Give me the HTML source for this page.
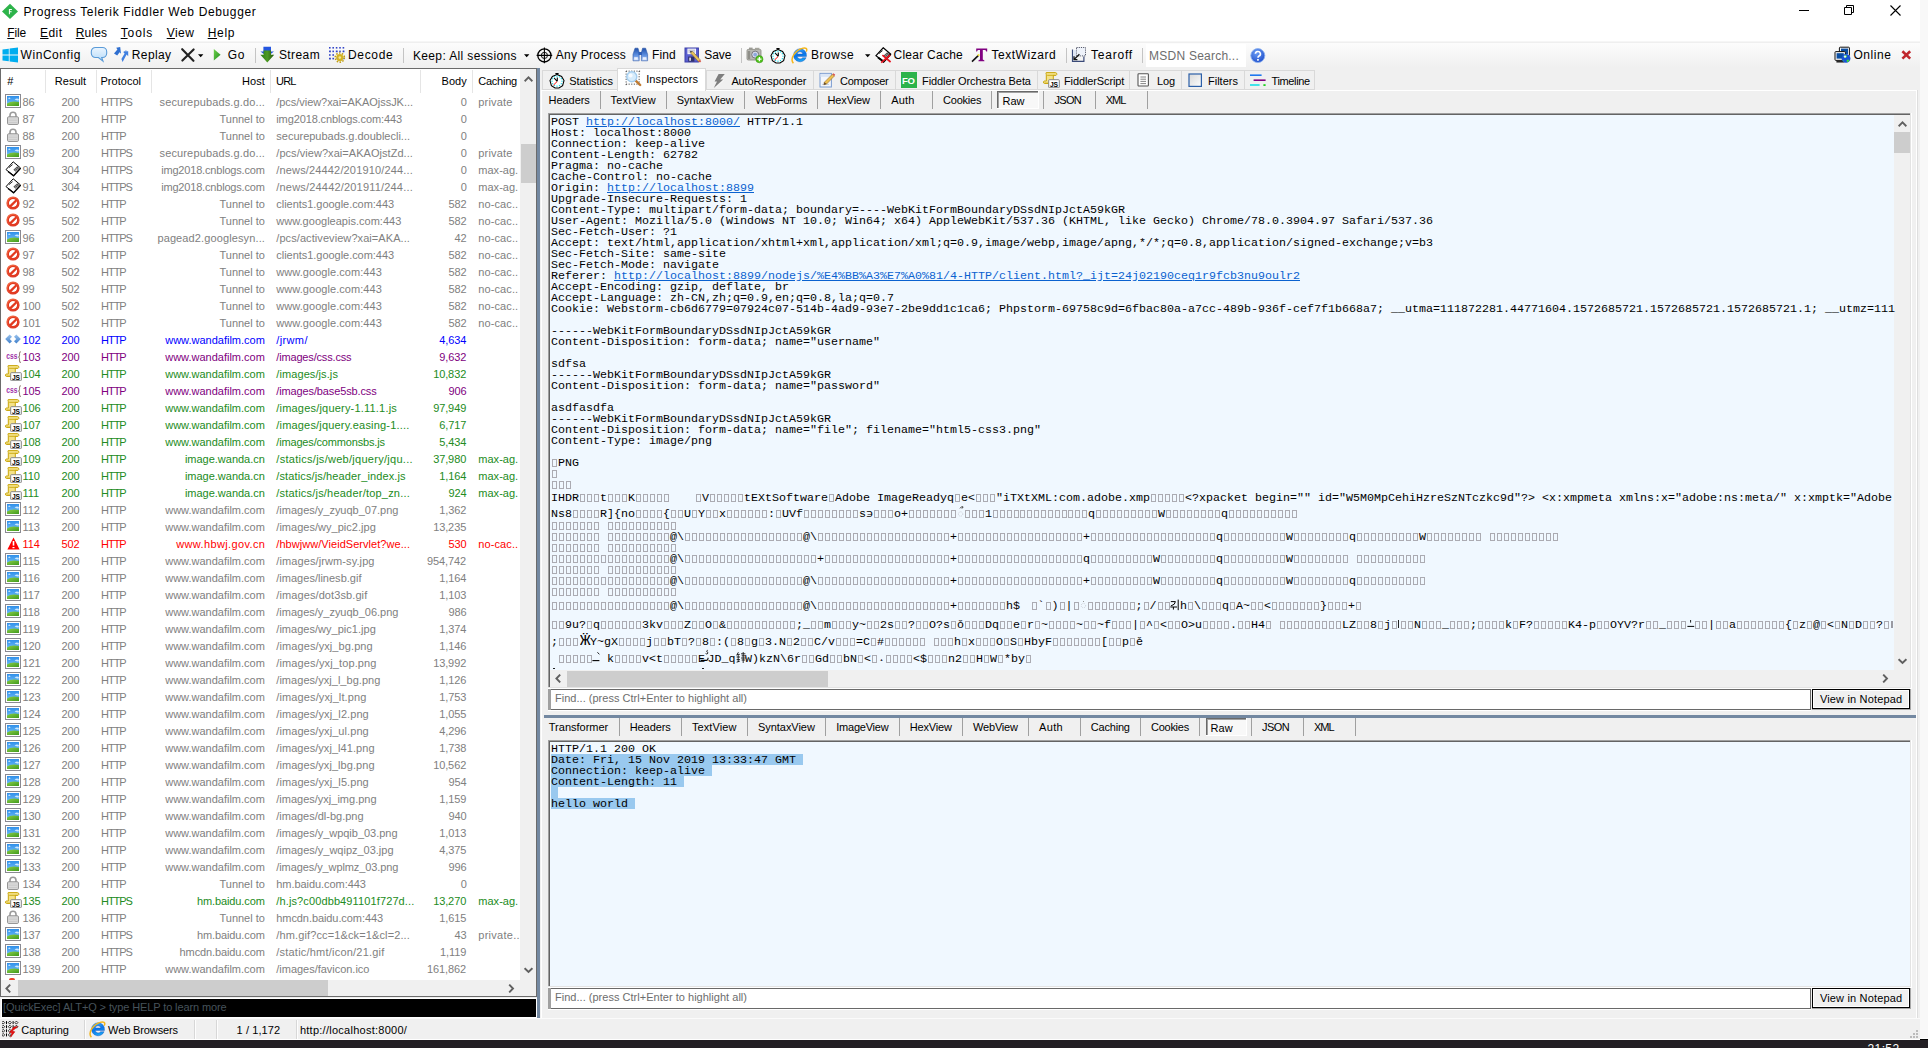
<!DOCTYPE html>
<html><head><meta charset="utf-8"><title>Fiddler</title>
<style>
html,body{margin:0;padding:0;background:#f0f0f0;}
body{width:1928px;height:1048px;overflow:hidden;font-family:"Liberation Sans",sans-serif;font-size:11px;color:#000;}
#root{position:relative;width:1928px;height:1048px;overflow:hidden;background:#f0f0f0;}
#root div,#root span.t,#root svg{position:absolute;}
span.t{white-space:pre;display:block;}
span.m{position:absolute;white-space:pre;display:block;font-family:"Liberation Mono",monospace;font-size:11.6667px;line-height:18px;letter-spacing:0.005px;color:#000;}
span.lk{color:#0a62d0;text-decoration:underline;}
div.tf{height:8px;background-repeat:repeat-x;
 background-image:linear-gradient(to right,transparent 1px,#ababb2 1px,#ababb2 6px,transparent 6px),linear-gradient(to right,transparent 1px,#ababb2 1px,#ababb2 6px,transparent 6px),linear-gradient(to right,transparent 1px,#ababb2 1px,#ababb2 2px,transparent 2px),linear-gradient(to right,transparent 5px,#ababb2 5px,#ababb2 6px,transparent 6px);
 background-size:7px 1px,7px 1px,7px 8px,7px 8px;background-position:0 0,0 7px,0 0,0 0;}

</style></head>
<body>
<div id="root">
<div style="left:0px;top:0px;width:1920px;height:42px;background:#fff;"></div>
<div style="left:1920px;top:0px;width:8px;height:1040px;background:#f8f8f8;"></div>
<div style="left:0px;top:43px;width:1920px;height:25px;background:linear-gradient(#fcfcfc,#f0f0f0);"></div>
<div style="left:0px;top:41px;width:1920px;height:1px;background:#f6f6f6;"></div>
<div style="left:0px;top:42px;width:1920px;height:1px;background:#efefef;"></div>
<div style="left:0px;top:1040px;width:1928px;height:8px;background:#231f24;"></div>
<div style="left:0px;top:68px;width:537px;height:929px;background:#6b6b6b;"></div>
<div style="left:1px;top:69px;width:535px;height:927px;background:#fff;"></div>
<div style="left:520px;top:69px;width:16px;height:911px;background:#f0f0f0;"></div>
<div style="left:521px;top:144px;width:15px;height:39px;background:#cdcdcd;"></div>
<div style="left:1px;top:980px;width:535px;height:16px;background:#f0f0f0;"></div>
<div style="left:18px;top:980px;width:310px;height:16px;background:#cdcdcd;"></div>
<div style="left:537px;top:68px;width:3px;height:950px;background:#7388a1;"></div>
<div style="left:1px;top:998px;width:536px;height:20px;background:#fff;"></div>
<div style="left:2px;top:999px;width:534px;height:18px;background:#000;"></div>
<div style="left:0px;top:1018px;width:1920px;height:22px;background:#f0f0f0;"></div>
<div style="left:0px;top:1018px;width:1920px;height:1px;background:#fbfbfb;"></div>
<div style="left:541px;top:90px;width:1376px;height:1px;background:#fff;"></div>
<div style="left:541px;top:90px;width:1px;height:928px;background:#fff;"></div>
<div style="left:1916px;top:90px;width:1px;height:928px;background:#fff;"></div>
<div style="left:1917px;top:90px;width:1px;height:928px;background:#dedede;"></div>
<div style="left:548px;top:113px;width:1362px;height:574px;background:#f0f8ff;"></div>
<div style="left:548px;top:113px;width:1362px;height:1px;background:#a0a0a0;"></div>
<div style="left:548px;top:113px;width:1px;height:574px;background:#a0a0a0;"></div>
<div style="left:549px;top:114px;width:1361px;height:1px;background:#646464;"></div>
<div style="left:549px;top:114px;width:1px;height:573px;background:#646464;"></div>
<div style="left:1910px;top:113px;width:1px;height:575px;background:#e3e3e3;"></div>
<div style="left:548px;top:687px;width:1363px;height:1px;background:#e3e3e3;"></div>
<div style="left:1911px;top:113px;width:1px;height:576px;background:#fff;"></div>
<div style="left:548px;top:688px;width:1364px;height:1px;background:#fff;"></div>
<div style="left:1894px;top:115px;width:16px;height:555px;background:#f0f0f0;"></div>
<div style="left:1894px;top:132px;width:16px;height:21px;background:#cdcdcd;"></div>
<div style="left:550px;top:670px;width:1360px;height:17px;background:#f0f0f0;"></div>
<div style="left:567px;top:671px;width:261px;height:16px;background:#cdcdcd;"></div>
<div style="left:548px;top:689px;width:1263px;height:21px;background:#696969;"></div>
<div style="left:548px;top:689px;width:3px;height:21px;background:#a0a0a0;"></div>
<div style="left:551px;top:690px;width:1259px;height:19px;background:#fff;"></div>
<div style="left:548px;top:710px;width:1263px;height:1px;background:#fff;"></div>
<div style="left:1812px;top:689px;width:99px;height:21px;background:#a8a8a8;"></div>
<div style="left:1812px;top:689px;width:98px;height:20px;background:#000;"></div>
<div style="left:1813px;top:690px;width:96px;height:18px;background:#fff;"></div>
<div style="left:1814px;top:691px;width:94px;height:16px;background:#f0f0f0;"></div>
<div style="left:544px;top:715px;width:1372px;height:3px;background:#7388a1;"></div>
<div style="left:548px;top:740px;width:1362px;height:246px;background:#f0f8ff;"></div>
<div style="left:548px;top:740px;width:1362px;height:1px;background:#a0a0a0;"></div>
<div style="left:548px;top:740px;width:1px;height:246px;background:#a0a0a0;"></div>
<div style="left:549px;top:741px;width:1361px;height:1px;background:#646464;"></div>
<div style="left:549px;top:741px;width:1px;height:245px;background:#646464;"></div>
<div style="left:1910px;top:740px;width:1px;height:247px;background:#e3e3e3;"></div>
<div style="left:548px;top:986px;width:1363px;height:1px;background:#e3e3e3;"></div>
<div style="left:1911px;top:740px;width:1px;height:248px;background:#fff;"></div>
<div style="left:548px;top:987px;width:1364px;height:1px;background:#fff;"></div>
<div style="left:548px;top:988px;width:1263px;height:21px;background:#696969;"></div>
<div style="left:548px;top:988px;width:3px;height:21px;background:#a0a0a0;"></div>
<div style="left:551px;top:989px;width:1259px;height:19px;background:#fff;"></div>
<div style="left:548px;top:1009px;width:1263px;height:1px;background:#fff;"></div>
<div style="left:1812px;top:988px;width:99px;height:21px;background:#a8a8a8;"></div>
<div style="left:1812px;top:988px;width:98px;height:20px;background:#000;"></div>
<div style="left:1813px;top:989px;width:96px;height:18px;background:#fff;"></div>
<div style="left:1814px;top:990px;width:94px;height:16px;background:#f0f0f0;"></div>
<span class="t" style="left:23.40px;top:2.84px;line-height:18px;font-size:12px;color:#000;letter-spacing:0.631px;">Progress Telerik Fiddler Web Debugger</span>
<span class="t" style="left:7.30px;top:23.84px;line-height:18px;font-size:12px;color:#000;letter-spacing:-0.161px;"><u>F</u>ile</span>
<span class="t" style="left:40.10px;top:23.84px;line-height:18px;font-size:12px;color:#000;letter-spacing:0.403px;"><u>E</u>dit</span>
<span class="t" style="left:75.80px;top:23.84px;line-height:18px;font-size:12px;color:#000;letter-spacing:0.143px;"><u>R</u>ules</span>
<span class="t" style="left:120.70px;top:23.84px;line-height:18px;font-size:12px;color:#000;letter-spacing:0.877px;"><u>T</u>ools</span>
<span class="t" style="left:166.70px;top:23.84px;line-height:18px;font-size:12px;color:#000;letter-spacing:0.476px;"><u>V</u>iew</span>
<span class="t" style="left:207.70px;top:23.84px;line-height:18px;font-size:12px;color:#000;letter-spacing:0.703px;"><u>H</u>elp</span>
<span class="t" style="left:20.50px;top:45.84px;line-height:18px;font-size:12px;color:#000;letter-spacing:0.571px;">WinConfig</span>
<span class="t" style="left:131.80px;top:45.84px;line-height:18px;font-size:12px;color:#000;letter-spacing:0.390px;">Replay</span>
<span class="t" style="left:227.80px;top:45.84px;line-height:18px;font-size:12px;color:#000;letter-spacing:0.542px;">Go</span>
<span class="t" style="left:278.90px;top:45.84px;line-height:18px;font-size:12px;color:#000;letter-spacing:0.419px;">Stream</span>
<span class="t" style="left:348.00px;top:45.84px;line-height:18px;font-size:12px;color:#000;letter-spacing:0.671px;">Decode</span>
<span class="t" style="left:412.90px;top:46.84px;line-height:18px;font-size:12px;color:#000;letter-spacing:0.373px;">Keep: All sessions</span>
<span class="t" style="left:555.70px;top:45.84px;line-height:18px;font-size:12px;color:#000;letter-spacing:0.267px;">Any Process</span>
<span class="t" style="left:652.10px;top:45.84px;line-height:18px;font-size:12px;color:#000;letter-spacing:0.089px;">Find</span>
<span class="t" style="left:704.20px;top:45.84px;line-height:18px;font-size:12px;color:#000;letter-spacing:-0.040px;">Save</span>
<span class="t" style="left:811.10px;top:45.84px;line-height:18px;font-size:12px;color:#000;letter-spacing:0.514px;">Browse</span>
<span class="t" style="left:893.50px;top:45.84px;line-height:18px;font-size:12px;color:#000;letter-spacing:0.254px;">Clear Cache</span>
<span class="t" style="left:991.40px;top:45.84px;line-height:18px;font-size:12px;color:#000;letter-spacing:0.546px;">TextWizard</span>
<span class="t" style="left:1090.90px;top:45.84px;line-height:18px;font-size:12px;color:#000;letter-spacing:0.804px;">Tearoff</span>
<span class="t" style="left:1853.50px;top:45.84px;line-height:18px;font-size:12px;color:#000;letter-spacing:0.535px;">Online</span>
<div style="left:255px;top:48px;width:1px;height:15px;background:#c4c4c4;"></div>
<div style="left:403px;top:48px;width:1px;height:15px;background:#c4c4c4;"></div>
<div style="left:741px;top:48px;width:1px;height:15px;background:#c4c4c4;"></div>
<div style="left:1066px;top:48px;width:1px;height:15px;background:#c4c4c4;"></div>
<div style="left:1142px;top:48px;width:1px;height:15px;background:#c4c4c4;"></div>
<div style="left:1146px;top:44px;width:100px;height:23px;background:#fff;"></div>
<span class="t" style="left:1149.10px;top:46.84px;line-height:18px;font-size:12px;color:#6d6d6d;letter-spacing:0.228px;">MSDN Search...</span>
<svg style="left:1px;top:3px" width="18" height="17" viewBox="0 0 18 17"><path d="M9 0.8 L17 8.4 L9 16 L1 8.4Z" fill="#2db34a"/><path d="M7.9 6 h3 v1 h-2 v1.2 h1.7 v1 h-1.7 v2 h-1z" fill="#fff"/></svg>
<svg style="left:1798px;top:4px" width="106" height="13" viewBox="0 0 106 13"><path d="M1 6.5h10" stroke="#000" stroke-width="1"/><path d="M46.5 3.5h7v7h-7z M48.5 3.5v-2h7v7h-2" fill="none" stroke="#000" stroke-width="1"/><path d="M92.5 1.5l10 10M102.5 1.5l-10 10" stroke="#000" stroke-width="1.1"/></svg>
<svg style="left:2px;top:47px" width="17" height="16" viewBox="0 0 17 16"><path d="M0.5 2.6 L6.8 1.7 V7.6 H0.5Z M7.6 1.6 L16 0.4 V7.6 H7.6Z M0.5 8.4 H6.8 V14.3 L0.5 13.4Z M7.6 8.4 H16 V15.6 L7.6 14.4Z" fill="#00adef"/></svg>
<svg style="left:90px;top:46px" width="18" height="17" viewBox="0 0 18 17"><defs><linearGradient id="gb" x1="0" y1="0" x2="0" y2="1"><stop offset="0" stop-color="#eaf5ff"/><stop offset="1" stop-color="#b9dcf8"/></linearGradient></defs><path d="M5.5 1.5 h7 a4.2 4.2 0 0 1 4.2 4.2 v1.6 a4.2 4.2 0 0 1 -4.2 4.2 h-0.8 l1.3 3.6 l-4.6 -3.6 h-2.9 a4.2 4.2 0 0 1 -4.2 -4.2 v-1.6 a4.2 4.2 0 0 1 4.2 -4.2z" fill="url(#gb)" stroke="#5a9bd8" stroke-width="1.1"/></svg>
<svg style="left:113px;top:46px" width="16" height="17" viewBox="0 0 16 17"><path d="M7.2 1 L3.2 1.8 L4.4 3.4 L1 7.6 L4.2 9.6 L6.6 6.2 L8 7.8Z" fill="#2f6fd0"/><path d="M9.6 16 L13.6 8.6 L15.2 10.2 L15.2 5.2 L10.2 6 L11.6 7.4 L8.4 13Z" fill="#3f7fe0"/><path d="M10.2 6 L12.6 4.6 L15.2 5.2" fill="#3f7fe0"/></svg>
<svg style="left:181px;top:48px" width="14" height="14" viewBox="0 0 14 14"><path d="M1.2 1.2 L12.4 12.8 M12.6 1.4 L1.4 12.6" stroke="#222" stroke-width="2.1" stroke-linecap="round"/></svg>
<svg style="left:198px;top:54px" width="6" height="4" viewBox="0 0 6 4"><path d="M0 0.3h5.4l-2.7 3z" fill="#000"/></svg>
<svg style="left:524px;top:54px" width="6" height="4" viewBox="0 0 6 4"><path d="M0 0.3h5.4l-2.7 3z" fill="#000"/></svg>
<svg style="left:864.5px;top:54px" width="6" height="4" viewBox="0 0 6 4"><path d="M0 0.3h5.4l-2.7 3z" fill="#000"/></svg>
<svg style="left:213px;top:48px" width="9" height="14" viewBox="0 0 9 14"><defs><linearGradient id="gg" x1="0" y1="0" x2="1" y2="1"><stop offset="0" stop-color="#6fd24a"/><stop offset="1" stop-color="#1f8a1f"/></linearGradient></defs><path d="M0.8 1 L7.6 6.8 L0.8 12.6Z" fill="url(#gg)"/></svg>
<svg style="left:260px;top:46px" width="15" height="18" viewBox="0 0 15 18"><defs><linearGradient id="gs" x1="0" y1="0" x2="1" y2="0"><stop offset="0" stop-color="#2e7d14"/><stop offset="0.5" stop-color="#4d9a22"/><stop offset="1" stop-color="#23560c"/></linearGradient></defs><path d="M3.4 0.8 h7.6 v4.6 h3 l-3 2.4 h-7.6 l-3 -2.4 h3z" fill="#2456e0"/><path d="M3.6 4.4 h7.4 v4.4 h3.2 l-6.9 7.8 l-6.9 -7.8 h3.2z" fill="url(#gs)"/></svg>
<svg style="left:328px;top:46px" width="18" height="18" viewBox="0 0 18 18"><rect x="1.0" y="1.0" width="1.6" height="1.6" fill="#3648c8"/><rect x="1.0" y="4.6" width="1.6" height="1.6" fill="#3648c8"/><rect x="1.0" y="8.2" width="1.6" height="1.6" fill="#3648c8"/><rect x="1.0" y="11.8" width="1.6" height="1.6" fill="#3648c8"/><rect x="4.4" y="1.0" width="1.6" height="1.6" fill="#3648c8"/><rect x="4.4" y="4.6" width="1.6" height="1.6" fill="#3648c8"/><rect x="4.4" y="8.2" width="1.6" height="1.6" fill="#3648c8"/><rect x="4.4" y="11.8" width="1.6" height="1.6" fill="#3648c8"/><rect x="7.8" y="1.0" width="1.6" height="1.6" fill="#3648c8"/><rect x="7.8" y="4.6" width="1.6" height="1.6" fill="#3648c8"/><rect x="11.2" y="1.0" width="1.6" height="1.6" fill="#3648c8"/><rect x="11.2" y="4.6" width="1.6" height="1.6" fill="#3648c8"/><rect x="14.6" y="1.0" width="1.6" height="1.6" fill="#3648c8"/><rect x="14.6" y="4.6" width="1.6" height="1.6" fill="#3648c8"/><rect x="1.8" y="4.6" width="0.9" height="1.6" fill="#3648c8"/><rect x="1.8" y="11.8" width="0.9" height="1.6" fill="#3648c8"/><rect x="8.6" y="4.6" width="0.9" height="1.6" fill="#3648c8"/><rect x="8.6" y="11.8" width="0.9" height="1.6" fill="#3648c8"/><rect x="15.4" y="4.6" width="0.9" height="1.6" fill="#3648c8"/><rect x="15.4" y="11.8" width="0.9" height="1.6" fill="#3648c8"/><circle cx="11.8" cy="11.6" r="3.6" fill="#d4b424"/><circle cx="11.8" cy="11.6" r="4.6" fill="none" stroke="#bf9c12" stroke-width="1.5" stroke-dasharray="1.5 1.4"/><circle cx="11.8" cy="11.6" r="1.3" fill="#f2e49a"/></svg>
<svg style="left:536px;top:47px" width="17" height="17" viewBox="0 0 17 17"><circle cx="8.4" cy="8.4" r="6.6" fill="none" stroke="#000" stroke-width="1.3"/><path d="M8.4 0.6v15.6M0.6 8.4h15.6" stroke="#000" stroke-width="1.1"/><circle cx="8.4" cy="8.4" r="3.1" fill="none" stroke="#000" stroke-width="0.9"/></svg>
<svg style="left:632px;top:47px" width="17" height="15" viewBox="0 0 17 15"><defs><linearGradient id="gbi" x1="0" y1="0" x2="0" y2="1"><stop offset="0" stop-color="#1f4fa8"/><stop offset="0.55" stop-color="#5d8fe0"/><stop offset="1" stop-color="#b8d0f6"/></linearGradient></defs><path d="M3 1.2h3l1.2 4.4v8.2h-6.2v-6.4z M10.6 1.2h3l2 6.2v6.4h-6.2v-8.2z" fill="url(#gbi)" stroke="#2a55a8" stroke-width="0.6"/><rect x="6.6" y="5" width="3.4" height="3" fill="#2f5fb8"/><rect x="2.2" y="10.2" width="3.6" height="2.6" fill="#e9f1ff"/><rect x="10.8" y="10.2" width="3.6" height="2.6" fill="#e9f1ff"/></svg>
<svg style="left:684px;top:47px" width="18" height="17" viewBox="0 0 18 17"><rect x="1" y="1" width="13.4" height="14" fill="#5a5fd0" stroke="#3b3fa8" stroke-width="1"/><rect x="3.4" y="1.6" width="8.6" height="5.6" fill="#f4f4fa"/><path d="M4.4 3.2h6.6M4.4 5h6.6" stroke="#9a9ab0" stroke-width="0.7"/><rect x="4.2" y="9.6" width="6.2" height="5" fill="#30306a"/><rect x="5.2" y="10.6" width="1.8" height="3.2" fill="#d0d0e0"/><path d="M6.4 5.8 l2.2 -1.4 l7.4 8.2 l-1.6 2 z" fill="#e8c25a" stroke="#8a6a1c" stroke-width="0.5"/><path d="M14.4 14.6 l1.6 -2 l1.2 1.6 l-1.2 1.4z" fill="#d85a4a"/><path d="M6.4 5.8l2.2 -1.4l-2.6 -0.6z" fill="#444"/></svg>
<svg style="left:746px;top:46px" width="18" height="18" viewBox="0 0 18 18"><rect x="1" y="3.4" width="14" height="10.6" rx="1.2" fill="#b9b9b4" stroke="#84847c" stroke-width="0.8"/><rect x="3" y="1.6" width="3.6" height="2" fill="#9a9a94"/><rect x="9" y="1.8" width="4.4" height="1.8" fill="#a4a49c"/><rect x="2" y="5" width="2.2" height="8" fill="#8e8e88"/><circle cx="9.2" cy="8.6" r="3.5" fill="#d8dcec" stroke="#6c6c74" stroke-width="0.9"/><circle cx="9.2" cy="8.6" r="1.9" fill="#8fa8dc"/><circle cx="13.4" cy="13.2" r="3.6" fill="#52c41c" stroke="#2c8a10" stroke-width="0.5"/><path d="M13.4 11.1v4.2M11.3 13.2h4.2" stroke="#fff" stroke-width="1.3"/></svg>
<svg style="left:770px;top:46.5px" width="17" height="17" viewBox="0 0 17 17"><path d="M6.4 1.6h3.2M8 1.6v2" stroke="#000" stroke-width="1.3"/><path d="M8 2.6 L12.6 4.4 L15 8.6 L13.6 13.6 L10 16 H6 L2.4 13.6 L1 8.6 L3.4 4.4Z" fill="#fff" stroke="#000" stroke-width="1.1"/><rect x="12.40" y="8.60" width="1.2" height="1.2" fill="#19d8e8"/><rect x="11.73" y="11.10" width="1.2" height="1.2" fill="#19d8e8"/><rect x="9.90" y="12.93" width="1.2" height="1.2" fill="#19d8e8"/><rect x="7.40" y="13.60" width="1.2" height="1.2" fill="#19d8e8"/><rect x="4.90" y="12.93" width="1.2" height="1.2" fill="#19d8e8"/><rect x="3.07" y="11.10" width="1.2" height="1.2" fill="#19d8e8"/><rect x="2.40" y="8.60" width="1.2" height="1.2" fill="#19d8e8"/><rect x="3.07" y="6.10" width="1.2" height="1.2" fill="#19d8e8"/><rect x="4.90" y="4.27" width="1.2" height="1.2" fill="#19d8e8"/><rect x="7.40" y="3.60" width="1.2" height="1.2" fill="#19d8e8"/><rect x="9.90" y="4.27" width="1.2" height="1.2" fill="#19d8e8"/><rect x="11.73" y="6.10" width="1.2" height="1.2" fill="#19d8e8"/><path d="M8.3 9.3V5.6M8.3 9.3L5.2 6.2" stroke="#000" stroke-width="1.1"/><path d="M8 9.6L4.4 13.2" stroke="#f00" stroke-width="1"/></svg>
<svg style="left:791px;top:46.5px" width="17" height="17" viewBox="0 0 17 17"><defs><linearGradient id="gie" x1="0" y1="0" x2="0.3" y2="1"><stop offset="0" stop-color="#45b4ff"/><stop offset="0.55" stop-color="#0a74e8"/><stop offset="1" stop-color="#1aa0f4"/></linearGradient></defs><path d="M9 1.8 a6.5 6.5 0 1 0 6.1 8.9 h-3.5 a3.1 3.1 0 0 1 -5.5 -1.3 h9.4 a6.5 6.5 0 0 0 -6.5 -7.6z M6.1 7 a3 3 0 0 1 5.8 0z" fill="url(#gie)" stroke="#0a4db8" stroke-width="0.4"/><path d="M2.4 16.2 C-1.8 11.4 5 3.2 11 1.4 C14.6 0.2 16.8 1.6 15.2 4.6" fill="none" stroke="#f4b61c" stroke-width="1.5"/></svg>
<svg style="left:875px;top:46.5px" width="17" height="17" viewBox="0 0 17 17"><path d="M8.2 0.8 L15.6 7 L8.6 14.6 L1 8.6Z" fill="#fff" stroke="#000" stroke-width="1.2"/><path d="M3 10.4 L8.6 14.6 L15.6 7" fill="none" stroke="#000" stroke-width="1.9"/><path d="M8.4 8.8 L12.2 5.2 L14.4 7 L10.6 10.8Z" fill="#555"/><path d="M10 8.6l1.6 1.2M11.4 7.4l1.4 1" stroke="#ddd" stroke-width="0.7"/><path d="M4 6.6 L7.6 3.6" stroke="#000" stroke-width="0.8"/><path d="M7.4 8.2 L15.6 15 M15.2 8 L6.2 15.6" stroke="#e8131f" stroke-width="1.7"/></svg>
<svg style="left:971px;top:47px" width="18" height="17" viewBox="0 0 18 17"><path d="M5.2 1.4 h11 v3 h-1 l-0.8 -1.4 h-2.6 v9.6 l1.6 0.8 v0.8 h-6 v-0.8 l1.6 -0.8 v-9.6 h-2.2 l-0.8 1.4 h-0.8z" fill="#800080"/><path d="M1 14.6 L7.2 8.6" stroke="#111" stroke-width="1.6"/><rect x="6.6" y="7.2" width="1.8" height="1.8" fill="#f0e020"/></svg>
<svg style="left:1071px;top:46px" width="16" height="17" viewBox="0 0 16 17"><rect x="5.5" y="1.5" width="9" height="8.4" fill="#eef2fa" stroke="#55596a" stroke-width="1" stroke-dasharray="1.2 1"/><path d="M1.5 3.4v12h11.4v-4.8" fill="none" stroke="#3a4a78" stroke-width="1.2"/><rect x="2.2" y="4" width="3" height="10.6" fill="#dfe6f4"/><path d="M3.2 13.4 L8.4 8.2 M3 10.2v3.4h3.4" stroke="#111" stroke-width="1.3" fill="none"/></svg>
<svg style="left:1250px;top:47.5px" width="16" height="16" viewBox="0 0 16 16"><defs><radialGradient id="gh" cx="0.4" cy="0.3" r="0.8"><stop offset="0" stop-color="#6a9cf4"/><stop offset="1" stop-color="#1a49c8"/></radialGradient></defs><circle cx="7.8" cy="7.6" r="7" fill="url(#gh)" stroke="#8ab0f0" stroke-width="0.9"/><path d="M5.4 5.8 a2.5 2.4 0 1 1 3.6 2.2 q-1 0.6 -1 1.8" fill="none" stroke="#fff" stroke-width="1.6"/><rect x="7.1" y="11" width="1.7" height="1.7" fill="#fff"/></svg>
<svg style="left:1834px;top:46px" width="18" height="18" viewBox="0 0 18 18"><rect x="5.4" y="1.2" width="10" height="8.6" rx="0.8" fill="#f4f4f4" stroke="#111" stroke-width="1"/><rect x="7" y="2.6" width="7" height="5.4" fill="#0b4ea2"/><rect x="1" y="5.6" width="10.4" height="8.8" rx="0.8" fill="#f4f4f4" stroke="#111" stroke-width="1"/><rect x="2.6" y="7.2" width="7.2" height="5.4" fill="#0b4ea2"/><path d="M2.4 15.8h8" stroke="#111" stroke-width="1.4"/><circle cx="12" cy="12.4" r="4.4" fill="#1a52d8"/><path d="M9.6 10.2q1.6 -1.6 3.2 -0.6q0.6 1.6 -0.8 2.2q-1.8 0.4 -2.4 -1.6z M12.6 14.2q1.4 -1.2 2.8 0q-0.8 2 -2.4 2z M8.6 14q1.2 0 1.6 1.6q-1.2 -0.2 -1.6 -1.6z" fill="#38e038"/><circle cx="11" cy="10.6" r="1.2" fill="#fff" opacity="0.85"/></svg>
<svg style="left:1901px;top:50px" width="11" height="10" viewBox="0 0 11 10"><path d="M1.4 1.2 L9.2 8.6 M9.2 1.2 L1.4 8.6" stroke="#c0272d" stroke-width="2.6"/></svg>
<svg width="0" height="0" style="left:0;top:0"><defs>
<linearGradient id="sky" x1="0" y1="0" x2="0" y2="1"><stop offset="0" stop-color="#2f8fea"/><stop offset="1" stop-color="#7cc6fa"/></linearGradient>
<linearGradient id="grs" x1="0" y1="0" x2="1" y2="1"><stop offset="0" stop-color="#8ccf4a"/><stop offset="1" stop-color="#3f9a1c"/></linearGradient>
<radialGradient id="rd" cx="0.4" cy="0.35" r="0.75"><stop offset="0" stop-color="#ff8a5a"/><stop offset="1" stop-color="#d8281a"/></radialGradient>
<linearGradient id="bl" x1="0" y1="0" x2="0" y2="1"><stop offset="0" stop-color="#9cc4ee"/><stop offset="1" stop-color="#3f7fca"/></linearGradient>
<linearGradient id="yl" x1="0" y1="0" x2="0" y2="1"><stop offset="0" stop-color="#f7e27a"/><stop offset="1" stop-color="#caa416"/></linearGradient>
<symbol id="i-img" viewBox="0 0 16 14"><rect x="0.5" y="0.5" width="15" height="13" fill="#fff" stroke="#8a8a92"/><rect x="2" y="2" width="12" height="10" fill="url(#sky)"/><path d="M2 9.4 Q6 6.6 14 8 V12 H2Z" fill="url(#grs)"/><path d="M3 4.2q1.4 -1.4 2.6 0q-1.2 1.4 -2.6 0z M9.6 5.6q2 -1.8 4.2 -0.6v1.2q-2.4 0.6 -4.2 -0.6z" fill="#d8efff" opacity="0.9"/></symbol>
<symbol id="i-lock" viewBox="0 0 12 14"><path d="M3 6.2V4.2a3 3 0 0 1 6 0v2" fill="none" stroke="#9a9a9a" stroke-width="1.6"/><rect x="0.6" y="5.8" width="10.8" height="7.6" rx="1" fill="#e2e2e2" stroke="#8c8c8c" stroke-width="1"/><path d="M1.6 8h8.8M1.6 9.8h8.8M1.6 11.6h8.8" stroke="#c4c4c4" stroke-width="0.9"/></symbol>
<symbol id="i-304" viewBox="0 0 17 17"><path d="M8.2 0.8 L15.6 7 L8.6 14.6 L1 8.6Z" fill="#fff" stroke="#000" stroke-width="1"/><path d="M3 10.6 L8.6 14.8 L15.6 7.2" fill="none" stroke="#000" stroke-width="1.3"/><path d="M8.4 8.8 L12.2 5.2 L14.4 7 L10.6 10.8Z" fill="#555"/><path d="M10 8.6l1.6 1.2M11.4 7.4l1.4 1" stroke="#ddd" stroke-width="0.7"/><path d="M4 6.6 L7.6 3.6" stroke="#000" stroke-width="0.8"/></symbol>
<symbol id="i-502" viewBox="0 0 14 14"><circle cx="7" cy="7" r="6.6" fill="url(#rd)"/><circle cx="7" cy="7" r="4.1" fill="#fff"/><path d="M4.2 10.4 L10.4 4.2" stroke="#e2391f" stroke-width="2.3"/><circle cx="7" cy="7" r="4.6" fill="none" stroke="#e2391f" stroke-width="1.1"/></symbol>
<symbol id="i-html" viewBox="0 0 16 10"><path d="M4.6 0.4 L7 2.8 L4.8 5 L7 7.2 L4.6 9.6 L0.2 5Z" fill="url(#bl)"/><path d="M11.4 0.4 L9 2.8 L11.2 5 L9 7.2 L11.4 9.6 L15.8 5Z" fill="url(#bl)"/></symbol>
<symbol id="i-css" viewBox="0 0 16 12"><text x="0.2" y="8.1" font-family="Liberation Sans" font-weight="bold" font-size="9.4" fill="#a032a8" textLength="11.2" lengthAdjust="spacingAndGlyphs">css</text><path d="M15 0.8 q-1.5 0 -1.5 1.5 v2.1 q0 1.4 -1.3 1.6 q1.3 0.2 1.3 1.6 v2.3 q0 1.5 1.5 1.5" fill="none" stroke="#9a8478" stroke-width="1.1"/></symbol>
<symbol id="i-js" viewBox="0 0 17 16"><path d="M3.2 0.6 h9.2 q1.8 0.3 1.4 1.9 q-0.4 1.1 -1.9 0.9 h-1.6 v6.2 q0 1.6 -1.6 1.8 h-7 q-1.7 -0.2 -1.3 -1.7 q0.4 -0.9 1.8 -0.7 h1.1 v-6.3 q-0.6 -1.9 -0.1 -2.1z" fill="#f4e288" stroke="#c9a60c" stroke-width="1"/><path d="M4.2 3.3h7.6" stroke="#c9a60c" stroke-width="0.9"/><path d="M1.6 11.2h5.2" stroke="#c9a60c" stroke-width="0.8"/><rect x="5.7" y="7.7" width="10.6" height="8" rx="0.7" fill="#fff" stroke="#858585" stroke-width="1"/><text x="6.9" y="14.5" font-family="Liberation Sans" font-weight="bold" font-size="7.4" fill="#000" textLength="8.2" lengthAdjust="spacingAndGlyphs">JS</text></symbol>
<symbol id="i-warn" viewBox="0 0 13 13"><path d="M6.5 0.4 L12.6 12.4 H0.4Z" fill="#f00"/><rect x="5.7" y="4" width="1.6" height="4.6" fill="#fff"/><rect x="5.5" y="10" width="2" height="1.2" fill="#fff"/></symbol>
</defs></svg>
<div style="left:45px;top:70px;width:1px;height:23px;background:#e5e5e5;"></div>
<div style="left:96px;top:70px;width:1px;height:23px;background:#e5e5e5;"></div>
<div style="left:151px;top:70px;width:1px;height:23px;background:#e5e5e5;"></div>
<div style="left:270px;top:70px;width:1px;height:23px;background:#e5e5e5;"></div>
<div style="left:420px;top:70px;width:1px;height:23px;background:#e5e5e5;"></div>
<div style="left:472px;top:70px;width:1px;height:23px;background:#e5e5e5;"></div>
<span class="t" style="left:7.20px;top:73.19px;line-height:16px;font-size:11px;color:#000;">#</span>
<span class="t" style="left:54.80px;top:73.19px;line-height:16px;font-size:11px;color:#000;letter-spacing:0.035px;">Result</span>
<span class="t" style="left:100.50px;top:73.19px;line-height:16px;font-size:11px;color:#000;letter-spacing:0.030px;">Protocol</span>
<span class="t" style="left:242.04px;top:73.19px;line-height:16px;font-size:11px;color:#000;letter-spacing:0.044px;">Host</span>
<span class="t" style="left:276.00px;top:73.19px;line-height:16px;font-size:11px;color:#000;letter-spacing:-0.805px;">URL</span>
<span class="t" style="left:441.53px;top:73.19px;line-height:16px;font-size:11px;color:#000;letter-spacing:0.030px;">Body</span>
<span class="t" style="left:478.20px;top:73.19px;line-height:16px;font-size:11px;color:#000;letter-spacing:-0.237px;">Caching</span>
<svg style="left:5px;top:94px" width="16" height="14"><use href="#i-img"/></svg>
<span class="t" style="left:22.50px;top:94.19px;line-height:16px;font-size:11px;color:#808080;letter-spacing:-0.1px;">86</span>
<span class="t" style="left:61.42px;top:94.19px;line-height:16px;font-size:11px;color:#808080;letter-spacing:-0.1px;">200</span>
<span class="t" style="left:101.10px;top:94.19px;line-height:16px;font-size:11px;color:#808080;letter-spacing:-1.092px;">HTTPS</span>
<span class="t" style="left:159.54px;top:94.19px;line-height:16px;font-size:11px;color:#808080;letter-spacing:0.138px;">securepubads.g.do...</span>
<span class="t" style="left:276.30px;top:94.19px;line-height:16px;font-size:11px;color:#808080;letter-spacing:-0.048px;">/pcs/view?xai=AKAOjssJK...</span>
<span class="t" style="left:460.68px;top:94.19px;line-height:16px;font-size:11px;color:#808080;letter-spacing:-0.1px;">0</span>
<span class="t" style="left:478.30px;top:94.19px;line-height:16px;font-size:11px;color:#808080;letter-spacing:0.181px;">private</span>
<svg style="left:7px;top:111px" width="12" height="14"><use href="#i-lock"/></svg>
<span class="t" style="left:22.50px;top:111.19px;line-height:16px;font-size:11px;color:#808080;letter-spacing:-0.1px;">87</span>
<span class="t" style="left:61.42px;top:111.19px;line-height:16px;font-size:11px;color:#808080;letter-spacing:-0.1px;">200</span>
<span class="t" style="left:101.10px;top:111.19px;line-height:16px;font-size:11px;color:#808080;letter-spacing:-1.034px;">HTTP</span>
<span class="t" style="left:219.49px;top:111.19px;line-height:16px;font-size:11px;color:#808080;letter-spacing:-0.008px;">Tunnel to</span>
<span class="t" style="left:276.30px;top:111.19px;line-height:16px;font-size:11px;color:#808080;letter-spacing:-0.123px;">img2018.cnblogs.com:443</span>
<span class="t" style="left:460.68px;top:111.19px;line-height:16px;font-size:11px;color:#808080;letter-spacing:-0.1px;">0</span>
<svg style="left:7px;top:128px" width="12" height="14"><use href="#i-lock"/></svg>
<span class="t" style="left:22.50px;top:128.19px;line-height:16px;font-size:11px;color:#808080;letter-spacing:-0.1px;">88</span>
<span class="t" style="left:61.42px;top:128.19px;line-height:16px;font-size:11px;color:#808080;letter-spacing:-0.1px;">200</span>
<span class="t" style="left:101.10px;top:128.19px;line-height:16px;font-size:11px;color:#808080;letter-spacing:-1.034px;">HTTP</span>
<span class="t" style="left:219.49px;top:128.19px;line-height:16px;font-size:11px;color:#808080;letter-spacing:-0.008px;">Tunnel to</span>
<span class="t" style="left:276.30px;top:128.19px;line-height:16px;font-size:11px;color:#808080;letter-spacing:-0.009px;">securepubads.g.doublecli...</span>
<span class="t" style="left:460.68px;top:128.19px;line-height:16px;font-size:11px;color:#808080;letter-spacing:-0.1px;">0</span>
<svg style="left:5px;top:145px" width="16" height="14"><use href="#i-img"/></svg>
<span class="t" style="left:22.50px;top:145.19px;line-height:16px;font-size:11px;color:#808080;letter-spacing:-0.1px;">89</span>
<span class="t" style="left:61.42px;top:145.19px;line-height:16px;font-size:11px;color:#808080;letter-spacing:-0.1px;">200</span>
<span class="t" style="left:101.10px;top:145.19px;line-height:16px;font-size:11px;color:#808080;letter-spacing:-1.092px;">HTTPS</span>
<span class="t" style="left:159.54px;top:145.19px;line-height:16px;font-size:11px;color:#808080;letter-spacing:0.138px;">securepubads.g.do...</span>
<span class="t" style="left:276.30px;top:145.19px;line-height:16px;font-size:11px;color:#808080;letter-spacing:0.045px;">/pcs/view?xai=AKAOjstZd...</span>
<span class="t" style="left:460.68px;top:145.19px;line-height:16px;font-size:11px;color:#808080;letter-spacing:-0.1px;">0</span>
<span class="t" style="left:478.30px;top:145.19px;line-height:16px;font-size:11px;color:#808080;letter-spacing:0.181px;">private</span>
<svg style="left:4.5px;top:160.8px" width="17" height="17"><use href="#i-304"/></svg>
<span class="t" style="left:22.50px;top:162.19px;line-height:16px;font-size:11px;color:#808080;letter-spacing:-0.1px;">90</span>
<span class="t" style="left:61.42px;top:162.19px;line-height:16px;font-size:11px;color:#808080;letter-spacing:-0.1px;">304</span>
<span class="t" style="left:101.10px;top:162.19px;line-height:16px;font-size:11px;color:#808080;letter-spacing:-1.092px;">HTTPS</span>
<span class="t" style="left:161.21px;top:162.19px;line-height:16px;font-size:11px;color:#808080;letter-spacing:-0.185px;">img2018.cnblogs.com</span>
<span class="t" style="left:276.30px;top:162.19px;line-height:16px;font-size:11px;color:#808080;letter-spacing:0.155px;">/news/24442/201910/244...</span>
<span class="t" style="left:460.68px;top:162.19px;line-height:16px;font-size:11px;color:#808080;letter-spacing:-0.1px;">0</span>
<span class="t" style="left:478.30px;top:162.19px;line-height:16px;font-size:11px;color:#808080;letter-spacing:0.021px;">max-ag.</span>
<svg style="left:4.5px;top:177.8px" width="17" height="17"><use href="#i-304"/></svg>
<span class="t" style="left:22.50px;top:179.19px;line-height:16px;font-size:11px;color:#808080;letter-spacing:-0.1px;">91</span>
<span class="t" style="left:61.42px;top:179.19px;line-height:16px;font-size:11px;color:#808080;letter-spacing:-0.1px;">304</span>
<span class="t" style="left:101.10px;top:179.19px;line-height:16px;font-size:11px;color:#808080;letter-spacing:-1.092px;">HTTPS</span>
<span class="t" style="left:161.21px;top:179.19px;line-height:16px;font-size:11px;color:#808080;letter-spacing:-0.185px;">img2018.cnblogs.com</span>
<span class="t" style="left:276.30px;top:179.19px;line-height:16px;font-size:11px;color:#808080;letter-spacing:0.188px;">/news/24442/201911/244...</span>
<span class="t" style="left:460.68px;top:179.19px;line-height:16px;font-size:11px;color:#808080;letter-spacing:-0.1px;">0</span>
<span class="t" style="left:478.30px;top:179.19px;line-height:16px;font-size:11px;color:#808080;letter-spacing:0.021px;">max-ag.</span>
<svg style="left:6px;top:196px" width="14" height="14"><use href="#i-502"/></svg>
<span class="t" style="left:22.50px;top:196.19px;line-height:16px;font-size:11px;color:#808080;letter-spacing:-0.1px;">92</span>
<span class="t" style="left:61.42px;top:196.19px;line-height:16px;font-size:11px;color:#808080;letter-spacing:-0.1px;">502</span>
<span class="t" style="left:101.10px;top:196.19px;line-height:16px;font-size:11px;color:#808080;letter-spacing:-1.034px;">HTTP</span>
<span class="t" style="left:219.49px;top:196.19px;line-height:16px;font-size:11px;color:#808080;letter-spacing:-0.008px;">Tunnel to</span>
<span class="t" style="left:276.30px;top:196.19px;line-height:16px;font-size:11px;color:#808080;letter-spacing:-0.037px;">clients1.google.com:443</span>
<span class="t" style="left:448.44px;top:196.19px;line-height:16px;font-size:11px;color:#808080;letter-spacing:-0.1px;">582</span>
<span class="t" style="left:478.30px;top:196.19px;line-height:16px;font-size:11px;color:#808080;letter-spacing:0.095px;">no-cac..</span>
<svg style="left:6px;top:213px" width="14" height="14"><use href="#i-502"/></svg>
<span class="t" style="left:22.50px;top:213.19px;line-height:16px;font-size:11px;color:#808080;letter-spacing:-0.1px;">95</span>
<span class="t" style="left:61.42px;top:213.19px;line-height:16px;font-size:11px;color:#808080;letter-spacing:-0.1px;">502</span>
<span class="t" style="left:101.10px;top:213.19px;line-height:16px;font-size:11px;color:#808080;letter-spacing:-1.034px;">HTTP</span>
<span class="t" style="left:219.49px;top:213.19px;line-height:16px;font-size:11px;color:#808080;letter-spacing:-0.008px;">Tunnel to</span>
<span class="t" style="left:276.30px;top:213.19px;line-height:16px;font-size:11px;color:#808080;letter-spacing:0.011px;">www.googleapis.com:443</span>
<span class="t" style="left:448.44px;top:213.19px;line-height:16px;font-size:11px;color:#808080;letter-spacing:-0.1px;">582</span>
<span class="t" style="left:478.30px;top:213.19px;line-height:16px;font-size:11px;color:#808080;letter-spacing:0.095px;">no-cac..</span>
<svg style="left:5px;top:230px" width="16" height="14"><use href="#i-img"/></svg>
<span class="t" style="left:22.50px;top:230.19px;line-height:16px;font-size:11px;color:#808080;letter-spacing:-0.1px;">96</span>
<span class="t" style="left:61.42px;top:230.19px;line-height:16px;font-size:11px;color:#808080;letter-spacing:-0.1px;">200</span>
<span class="t" style="left:101.10px;top:230.19px;line-height:16px;font-size:11px;color:#808080;letter-spacing:-1.092px;">HTTPS</span>
<span class="t" style="left:157.42px;top:230.19px;line-height:16px;font-size:11px;color:#808080;letter-spacing:0.120px;">pagead2.googlesyn...</span>
<span class="t" style="left:276.30px;top:230.19px;line-height:16px;font-size:11px;color:#808080;letter-spacing:0.074px;">/pcs/activeview?xai=AKA...</span>
<span class="t" style="left:454.55px;top:230.19px;line-height:16px;font-size:11px;color:#808080;letter-spacing:-0.1px;">42</span>
<span class="t" style="left:478.30px;top:230.19px;line-height:16px;font-size:11px;color:#808080;letter-spacing:0.095px;">no-cac..</span>
<svg style="left:6px;top:247px" width="14" height="14"><use href="#i-502"/></svg>
<span class="t" style="left:22.50px;top:247.19px;line-height:16px;font-size:11px;color:#808080;letter-spacing:-0.1px;">97</span>
<span class="t" style="left:61.42px;top:247.19px;line-height:16px;font-size:11px;color:#808080;letter-spacing:-0.1px;">502</span>
<span class="t" style="left:101.10px;top:247.19px;line-height:16px;font-size:11px;color:#808080;letter-spacing:-1.034px;">HTTP</span>
<span class="t" style="left:219.49px;top:247.19px;line-height:16px;font-size:11px;color:#808080;letter-spacing:-0.008px;">Tunnel to</span>
<span class="t" style="left:276.30px;top:247.19px;line-height:16px;font-size:11px;color:#808080;letter-spacing:-0.037px;">clients1.google.com:443</span>
<span class="t" style="left:448.44px;top:247.19px;line-height:16px;font-size:11px;color:#808080;letter-spacing:-0.1px;">582</span>
<span class="t" style="left:478.30px;top:247.19px;line-height:16px;font-size:11px;color:#808080;letter-spacing:0.095px;">no-cac..</span>
<svg style="left:6px;top:264px" width="14" height="14"><use href="#i-502"/></svg>
<span class="t" style="left:22.50px;top:264.19px;line-height:16px;font-size:11px;color:#808080;letter-spacing:-0.1px;">98</span>
<span class="t" style="left:61.42px;top:264.19px;line-height:16px;font-size:11px;color:#808080;letter-spacing:-0.1px;">502</span>
<span class="t" style="left:101.10px;top:264.19px;line-height:16px;font-size:11px;color:#808080;letter-spacing:-1.034px;">HTTP</span>
<span class="t" style="left:219.49px;top:264.19px;line-height:16px;font-size:11px;color:#808080;letter-spacing:-0.008px;">Tunnel to</span>
<span class="t" style="left:276.30px;top:264.19px;line-height:16px;font-size:11px;color:#808080;letter-spacing:0.058px;">www.google.com:443</span>
<span class="t" style="left:448.44px;top:264.19px;line-height:16px;font-size:11px;color:#808080;letter-spacing:-0.1px;">582</span>
<span class="t" style="left:478.30px;top:264.19px;line-height:16px;font-size:11px;color:#808080;letter-spacing:0.095px;">no-cac..</span>
<svg style="left:6px;top:281px" width="14" height="14"><use href="#i-502"/></svg>
<span class="t" style="left:22.50px;top:281.19px;line-height:16px;font-size:11px;color:#808080;letter-spacing:-0.1px;">99</span>
<span class="t" style="left:61.42px;top:281.19px;line-height:16px;font-size:11px;color:#808080;letter-spacing:-0.1px;">502</span>
<span class="t" style="left:101.10px;top:281.19px;line-height:16px;font-size:11px;color:#808080;letter-spacing:-1.034px;">HTTP</span>
<span class="t" style="left:219.49px;top:281.19px;line-height:16px;font-size:11px;color:#808080;letter-spacing:-0.008px;">Tunnel to</span>
<span class="t" style="left:276.30px;top:281.19px;line-height:16px;font-size:11px;color:#808080;letter-spacing:0.058px;">www.google.com:443</span>
<span class="t" style="left:448.44px;top:281.19px;line-height:16px;font-size:11px;color:#808080;letter-spacing:-0.1px;">582</span>
<span class="t" style="left:478.30px;top:281.19px;line-height:16px;font-size:11px;color:#808080;letter-spacing:0.095px;">no-cac..</span>
<svg style="left:6px;top:298px" width="14" height="14"><use href="#i-502"/></svg>
<span class="t" style="left:22.50px;top:298.19px;line-height:16px;font-size:11px;color:#808080;letter-spacing:-0.1px;">100</span>
<span class="t" style="left:61.42px;top:298.19px;line-height:16px;font-size:11px;color:#808080;letter-spacing:-0.1px;">502</span>
<span class="t" style="left:101.10px;top:298.19px;line-height:16px;font-size:11px;color:#808080;letter-spacing:-1.034px;">HTTP</span>
<span class="t" style="left:219.49px;top:298.19px;line-height:16px;font-size:11px;color:#808080;letter-spacing:-0.008px;">Tunnel to</span>
<span class="t" style="left:276.30px;top:298.19px;line-height:16px;font-size:11px;color:#808080;letter-spacing:0.058px;">www.google.com:443</span>
<span class="t" style="left:448.44px;top:298.19px;line-height:16px;font-size:11px;color:#808080;letter-spacing:-0.1px;">582</span>
<span class="t" style="left:478.30px;top:298.19px;line-height:16px;font-size:11px;color:#808080;letter-spacing:0.095px;">no-cac..</span>
<svg style="left:6px;top:315px" width="14" height="14"><use href="#i-502"/></svg>
<span class="t" style="left:22.50px;top:315.19px;line-height:16px;font-size:11px;color:#808080;letter-spacing:-0.1px;">101</span>
<span class="t" style="left:61.42px;top:315.19px;line-height:16px;font-size:11px;color:#808080;letter-spacing:-0.1px;">502</span>
<span class="t" style="left:101.10px;top:315.19px;line-height:16px;font-size:11px;color:#808080;letter-spacing:-1.034px;">HTTP</span>
<span class="t" style="left:219.49px;top:315.19px;line-height:16px;font-size:11px;color:#808080;letter-spacing:-0.008px;">Tunnel to</span>
<span class="t" style="left:276.30px;top:315.19px;line-height:16px;font-size:11px;color:#808080;letter-spacing:0.058px;">www.google.com:443</span>
<span class="t" style="left:448.44px;top:315.19px;line-height:16px;font-size:11px;color:#808080;letter-spacing:-0.1px;">582</span>
<span class="t" style="left:478.30px;top:315.19px;line-height:16px;font-size:11px;color:#808080;letter-spacing:0.095px;">no-cac..</span>
<svg style="left:5px;top:334px" width="16" height="10"><use href="#i-html"/></svg>
<span class="t" style="left:22.50px;top:332.19px;line-height:16px;font-size:11px;color:#0000ff;letter-spacing:-0.1px;">102</span>
<span class="t" style="left:61.42px;top:332.19px;line-height:16px;font-size:11px;color:#0000ff;letter-spacing:-0.1px;">200</span>
<span class="t" style="left:101.10px;top:332.19px;line-height:16px;font-size:11px;color:#0000ff;letter-spacing:-1.034px;">HTTP</span>
<span class="t" style="left:165.20px;top:332.19px;line-height:16px;font-size:11px;color:#0000ff;">www.wandafilm.com</span>
<span class="t" style="left:276.30px;top:332.19px;line-height:16px;font-size:11px;color:#0000ff;letter-spacing:0.362px;">/jrwm/</span>
<span class="t" style="left:439.27px;top:332.19px;line-height:16px;font-size:11px;color:#0000ff;letter-spacing:-0.1px;">4,634</span>
<svg style="left:5.5px;top:351px" width="16" height="12"><use href="#i-css"/></svg>
<span class="t" style="left:22.50px;top:349.19px;line-height:16px;font-size:11px;color:#800080;letter-spacing:-0.1px;">103</span>
<span class="t" style="left:61.42px;top:349.19px;line-height:16px;font-size:11px;color:#800080;letter-spacing:-0.1px;">200</span>
<span class="t" style="left:101.10px;top:349.19px;line-height:16px;font-size:11px;color:#800080;letter-spacing:-1.034px;">HTTP</span>
<span class="t" style="left:165.20px;top:349.19px;line-height:16px;font-size:11px;color:#800080;">www.wandafilm.com</span>
<span class="t" style="left:276.30px;top:349.19px;line-height:16px;font-size:11px;color:#800080;letter-spacing:-0.169px;">/images/css.css</span>
<span class="t" style="left:439.27px;top:349.19px;line-height:16px;font-size:11px;color:#800080;letter-spacing:-0.1px;">9,632</span>
<svg style="left:5px;top:365px" width="17" height="16"><use href="#i-js"/></svg>
<span class="t" style="left:22.50px;top:366.19px;line-height:16px;font-size:11px;color:#228b22;letter-spacing:-0.1px;">104</span>
<span class="t" style="left:61.42px;top:366.19px;line-height:16px;font-size:11px;color:#228b22;letter-spacing:-0.1px;">200</span>
<span class="t" style="left:101.10px;top:366.19px;line-height:16px;font-size:11px;color:#228b22;letter-spacing:-1.034px;">HTTP</span>
<span class="t" style="left:165.20px;top:366.19px;line-height:16px;font-size:11px;color:#228b22;">www.wandafilm.com</span>
<span class="t" style="left:276.30px;top:366.19px;line-height:16px;font-size:11px;color:#228b22;letter-spacing:0.090px;">/images/js.js</span>
<span class="t" style="left:433.14px;top:366.19px;line-height:16px;font-size:11px;color:#228b22;letter-spacing:-0.1px;">10,832</span>
<svg style="left:5.5px;top:385px" width="16" height="12"><use href="#i-css"/></svg>
<span class="t" style="left:22.50px;top:383.19px;line-height:16px;font-size:11px;color:#800080;letter-spacing:-0.1px;">105</span>
<span class="t" style="left:61.42px;top:383.19px;line-height:16px;font-size:11px;color:#800080;letter-spacing:-0.1px;">200</span>
<span class="t" style="left:101.10px;top:383.19px;line-height:16px;font-size:11px;color:#800080;letter-spacing:-1.034px;">HTTP</span>
<span class="t" style="left:165.20px;top:383.19px;line-height:16px;font-size:11px;color:#800080;">www.wandafilm.com</span>
<span class="t" style="left:276.30px;top:383.19px;line-height:16px;font-size:11px;color:#800080;letter-spacing:-0.127px;">/images/base5sb.css</span>
<span class="t" style="left:448.44px;top:383.19px;line-height:16px;font-size:11px;color:#800080;letter-spacing:-0.1px;">906</span>
<svg style="left:5px;top:399px" width="17" height="16"><use href="#i-js"/></svg>
<span class="t" style="left:22.50px;top:400.19px;line-height:16px;font-size:11px;color:#228b22;letter-spacing:-0.1px;">106</span>
<span class="t" style="left:61.42px;top:400.19px;line-height:16px;font-size:11px;color:#228b22;letter-spacing:-0.1px;">200</span>
<span class="t" style="left:101.10px;top:400.19px;line-height:16px;font-size:11px;color:#228b22;letter-spacing:-1.034px;">HTTP</span>
<span class="t" style="left:165.20px;top:400.19px;line-height:16px;font-size:11px;color:#228b22;">www.wandafilm.com</span>
<span class="t" style="left:276.30px;top:400.19px;line-height:16px;font-size:11px;color:#228b22;letter-spacing:0.197px;">/images/jquery-1.11.1.js</span>
<span class="t" style="left:433.14px;top:400.19px;line-height:16px;font-size:11px;color:#228b22;letter-spacing:-0.1px;">97,949</span>
<svg style="left:5px;top:416px" width="17" height="16"><use href="#i-js"/></svg>
<span class="t" style="left:22.50px;top:417.19px;line-height:16px;font-size:11px;color:#228b22;letter-spacing:-0.1px;">107</span>
<span class="t" style="left:61.42px;top:417.19px;line-height:16px;font-size:11px;color:#228b22;letter-spacing:-0.1px;">200</span>
<span class="t" style="left:101.10px;top:417.19px;line-height:16px;font-size:11px;color:#228b22;letter-spacing:-1.034px;">HTTP</span>
<span class="t" style="left:165.20px;top:417.19px;line-height:16px;font-size:11px;color:#228b22;">www.wandafilm.com</span>
<span class="t" style="left:276.30px;top:417.19px;line-height:16px;font-size:11px;color:#228b22;letter-spacing:0.181px;">/images/jquery.easing-1....</span>
<span class="t" style="left:439.27px;top:417.19px;line-height:16px;font-size:11px;color:#228b22;letter-spacing:-0.1px;">6,717</span>
<svg style="left:5px;top:433px" width="17" height="16"><use href="#i-js"/></svg>
<span class="t" style="left:22.50px;top:434.19px;line-height:16px;font-size:11px;color:#228b22;letter-spacing:-0.1px;">108</span>
<span class="t" style="left:61.42px;top:434.19px;line-height:16px;font-size:11px;color:#228b22;letter-spacing:-0.1px;">200</span>
<span class="t" style="left:101.10px;top:434.19px;line-height:16px;font-size:11px;color:#228b22;letter-spacing:-1.034px;">HTTP</span>
<span class="t" style="left:165.20px;top:434.19px;line-height:16px;font-size:11px;color:#228b22;">www.wandafilm.com</span>
<span class="t" style="left:276.30px;top:434.19px;line-height:16px;font-size:11px;color:#228b22;letter-spacing:-0.169px;">/images/commonsbs.js</span>
<span class="t" style="left:439.27px;top:434.19px;line-height:16px;font-size:11px;color:#228b22;letter-spacing:-0.1px;">5,434</span>
<svg style="left:5px;top:450px" width="17" height="16"><use href="#i-js"/></svg>
<span class="t" style="left:22.50px;top:451.19px;line-height:16px;font-size:11px;color:#228b22;letter-spacing:-0.1px;">109</span>
<span class="t" style="left:61.42px;top:451.19px;line-height:16px;font-size:11px;color:#228b22;letter-spacing:-0.1px;">200</span>
<span class="t" style="left:101.10px;top:451.19px;line-height:16px;font-size:11px;color:#228b22;letter-spacing:-1.034px;">HTTP</span>
<span class="t" style="left:184.89px;top:451.19px;line-height:16px;font-size:11px;color:#228b22;letter-spacing:-0.008px;">image.wanda.cn</span>
<span class="t" style="left:276.30px;top:451.19px;line-height:16px;font-size:11px;color:#228b22;letter-spacing:0.283px;">/statics/js/web/jquery/jqu...</span>
<span class="t" style="left:433.14px;top:451.19px;line-height:16px;font-size:11px;color:#228b22;letter-spacing:-0.1px;">37,980</span>
<span class="t" style="left:478.30px;top:451.19px;line-height:16px;font-size:11px;color:#228b22;letter-spacing:0.021px;">max-ag.</span>
<svg style="left:5px;top:467px" width="17" height="16"><use href="#i-js"/></svg>
<span class="t" style="left:22.50px;top:468.19px;line-height:16px;font-size:11px;color:#228b22;letter-spacing:-0.1px;">110</span>
<span class="t" style="left:61.42px;top:468.19px;line-height:16px;font-size:11px;color:#228b22;letter-spacing:-0.1px;">200</span>
<span class="t" style="left:101.10px;top:468.19px;line-height:16px;font-size:11px;color:#228b22;letter-spacing:-1.034px;">HTTP</span>
<span class="t" style="left:184.89px;top:468.19px;line-height:16px;font-size:11px;color:#228b22;letter-spacing:-0.008px;">image.wanda.cn</span>
<span class="t" style="left:276.30px;top:468.19px;line-height:16px;font-size:11px;color:#228b22;letter-spacing:0.128px;">/statics/js/header_index.js</span>
<span class="t" style="left:439.27px;top:468.19px;line-height:16px;font-size:11px;color:#228b22;letter-spacing:-0.1px;">1,164</span>
<span class="t" style="left:478.30px;top:468.19px;line-height:16px;font-size:11px;color:#228b22;letter-spacing:0.021px;">max-ag.</span>
<svg style="left:5px;top:484px" width="17" height="16"><use href="#i-js"/></svg>
<span class="t" style="left:22.50px;top:485.19px;line-height:16px;font-size:11px;color:#228b22;letter-spacing:-0.1px;">111</span>
<span class="t" style="left:61.42px;top:485.19px;line-height:16px;font-size:11px;color:#228b22;letter-spacing:-0.1px;">200</span>
<span class="t" style="left:101.10px;top:485.19px;line-height:16px;font-size:11px;color:#228b22;letter-spacing:-1.034px;">HTTP</span>
<span class="t" style="left:184.89px;top:485.19px;line-height:16px;font-size:11px;color:#228b22;letter-spacing:-0.008px;">image.wanda.cn</span>
<span class="t" style="left:276.30px;top:485.19px;line-height:16px;font-size:11px;color:#228b22;letter-spacing:0.211px;">/statics/js/header/top_zn...</span>
<span class="t" style="left:448.44px;top:485.19px;line-height:16px;font-size:11px;color:#228b22;letter-spacing:-0.1px;">924</span>
<span class="t" style="left:478.30px;top:485.19px;line-height:16px;font-size:11px;color:#228b22;letter-spacing:0.021px;">max-ag.</span>
<svg style="left:5px;top:502px" width="16" height="14"><use href="#i-img"/></svg>
<span class="t" style="left:22.50px;top:502.19px;line-height:16px;font-size:11px;color:#808080;letter-spacing:-0.1px;">112</span>
<span class="t" style="left:61.42px;top:502.19px;line-height:16px;font-size:11px;color:#808080;letter-spacing:-0.1px;">200</span>
<span class="t" style="left:101.10px;top:502.19px;line-height:16px;font-size:11px;color:#808080;letter-spacing:-1.034px;">HTTP</span>
<span class="t" style="left:165.20px;top:502.19px;line-height:16px;font-size:11px;color:#808080;">www.wandafilm.com</span>
<span class="t" style="left:276.30px;top:502.19px;line-height:16px;font-size:11px;color:#808080;letter-spacing:-0.010px;">/images/y_zyuqb_07.png</span>
<span class="t" style="left:439.27px;top:502.19px;line-height:16px;font-size:11px;color:#808080;letter-spacing:-0.1px;">1,362</span>
<svg style="left:5px;top:519px" width="16" height="14"><use href="#i-img"/></svg>
<span class="t" style="left:22.50px;top:519.19px;line-height:16px;font-size:11px;color:#808080;letter-spacing:-0.1px;">113</span>
<span class="t" style="left:61.42px;top:519.19px;line-height:16px;font-size:11px;color:#808080;letter-spacing:-0.1px;">200</span>
<span class="t" style="left:101.10px;top:519.19px;line-height:16px;font-size:11px;color:#808080;letter-spacing:-1.034px;">HTTP</span>
<span class="t" style="left:165.20px;top:519.19px;line-height:16px;font-size:11px;color:#808080;">www.wandafilm.com</span>
<span class="t" style="left:276.30px;top:519.19px;line-height:16px;font-size:11px;color:#808080;letter-spacing:0.023px;">/images/wy_pic2.jpg</span>
<span class="t" style="left:433.14px;top:519.19px;line-height:16px;font-size:11px;color:#808080;letter-spacing:-0.1px;">13,235</span>
<svg style="left:6.5px;top:536.8px" width="13" height="13"><use href="#i-warn"/></svg>
<span class="t" style="left:22.50px;top:536.19px;line-height:16px;font-size:11px;color:#ff0000;letter-spacing:-0.1px;">114</span>
<span class="t" style="left:61.42px;top:536.19px;line-height:16px;font-size:11px;color:#ff0000;letter-spacing:-0.1px;">502</span>
<span class="t" style="left:101.10px;top:536.19px;line-height:16px;font-size:11px;color:#ff0000;letter-spacing:-1.034px;">HTTP</span>
<span class="t" style="left:176.26px;top:536.19px;line-height:16px;font-size:11px;color:#ff0000;letter-spacing:0.362px;">www.hbwj.gov.cn</span>
<span class="t" style="left:276.30px;top:536.19px;line-height:16px;font-size:11px;color:#ff0000;letter-spacing:0.047px;">/hbwjww/VieidServlet?we...</span>
<span class="t" style="left:448.44px;top:536.19px;line-height:16px;font-size:11px;color:#ff0000;letter-spacing:-0.1px;">530</span>
<span class="t" style="left:478.30px;top:536.19px;line-height:16px;font-size:11px;color:#ff0000;letter-spacing:0.095px;">no-cac..</span>
<svg style="left:5px;top:553px" width="16" height="14"><use href="#i-img"/></svg>
<span class="t" style="left:22.50px;top:553.19px;line-height:16px;font-size:11px;color:#808080;letter-spacing:-0.1px;">115</span>
<span class="t" style="left:61.42px;top:553.19px;line-height:16px;font-size:11px;color:#808080;letter-spacing:-0.1px;">200</span>
<span class="t" style="left:101.10px;top:553.19px;line-height:16px;font-size:11px;color:#808080;letter-spacing:-1.034px;">HTTP</span>
<span class="t" style="left:165.20px;top:553.19px;line-height:16px;font-size:11px;color:#808080;">www.wandafilm.com</span>
<span class="t" style="left:276.30px;top:553.19px;line-height:16px;font-size:11px;color:#808080;letter-spacing:0.101px;">/images/jrwm-sy.jpg</span>
<span class="t" style="left:427.03px;top:553.19px;line-height:16px;font-size:11px;color:#808080;letter-spacing:-0.1px;">954,742</span>
<svg style="left:5px;top:570px" width="16" height="14"><use href="#i-img"/></svg>
<span class="t" style="left:22.50px;top:570.19px;line-height:16px;font-size:11px;color:#808080;letter-spacing:-0.1px;">116</span>
<span class="t" style="left:61.42px;top:570.19px;line-height:16px;font-size:11px;color:#808080;letter-spacing:-0.1px;">200</span>
<span class="t" style="left:101.10px;top:570.19px;line-height:16px;font-size:11px;color:#808080;letter-spacing:-1.034px;">HTTP</span>
<span class="t" style="left:165.20px;top:570.19px;line-height:16px;font-size:11px;color:#808080;">www.wandafilm.com</span>
<span class="t" style="left:276.30px;top:570.19px;line-height:16px;font-size:11px;color:#808080;letter-spacing:0.011px;">/images/linesb.gif</span>
<span class="t" style="left:439.27px;top:570.19px;line-height:16px;font-size:11px;color:#808080;letter-spacing:-0.1px;">1,164</span>
<svg style="left:5px;top:587px" width="16" height="14"><use href="#i-img"/></svg>
<span class="t" style="left:22.50px;top:587.19px;line-height:16px;font-size:11px;color:#808080;letter-spacing:-0.1px;">117</span>
<span class="t" style="left:61.42px;top:587.19px;line-height:16px;font-size:11px;color:#808080;letter-spacing:-0.1px;">200</span>
<span class="t" style="left:101.10px;top:587.19px;line-height:16px;font-size:11px;color:#808080;letter-spacing:-1.034px;">HTTP</span>
<span class="t" style="left:165.20px;top:587.19px;line-height:16px;font-size:11px;color:#808080;">www.wandafilm.com</span>
<span class="t" style="left:276.30px;top:587.19px;line-height:16px;font-size:11px;color:#808080;letter-spacing:0.095px;">/images/dot3sb.gif</span>
<span class="t" style="left:439.27px;top:587.19px;line-height:16px;font-size:11px;color:#808080;letter-spacing:-0.1px;">1,103</span>
<svg style="left:5px;top:604px" width="16" height="14"><use href="#i-img"/></svg>
<span class="t" style="left:22.50px;top:604.19px;line-height:16px;font-size:11px;color:#808080;letter-spacing:-0.1px;">118</span>
<span class="t" style="left:61.42px;top:604.19px;line-height:16px;font-size:11px;color:#808080;letter-spacing:-0.1px;">200</span>
<span class="t" style="left:101.10px;top:604.19px;line-height:16px;font-size:11px;color:#808080;letter-spacing:-1.034px;">HTTP</span>
<span class="t" style="left:165.20px;top:604.19px;line-height:16px;font-size:11px;color:#808080;">www.wandafilm.com</span>
<span class="t" style="left:276.30px;top:604.19px;line-height:16px;font-size:11px;color:#808080;letter-spacing:-0.010px;">/images/y_zyuqb_06.png</span>
<span class="t" style="left:448.44px;top:604.19px;line-height:16px;font-size:11px;color:#808080;letter-spacing:-0.1px;">986</span>
<svg style="left:5px;top:621px" width="16" height="14"><use href="#i-img"/></svg>
<span class="t" style="left:22.50px;top:621.19px;line-height:16px;font-size:11px;color:#808080;letter-spacing:-0.1px;">119</span>
<span class="t" style="left:61.42px;top:621.19px;line-height:16px;font-size:11px;color:#808080;letter-spacing:-0.1px;">200</span>
<span class="t" style="left:101.10px;top:621.19px;line-height:16px;font-size:11px;color:#808080;letter-spacing:-1.034px;">HTTP</span>
<span class="t" style="left:165.20px;top:621.19px;line-height:16px;font-size:11px;color:#808080;">www.wandafilm.com</span>
<span class="t" style="left:276.30px;top:621.19px;line-height:16px;font-size:11px;color:#808080;letter-spacing:0.023px;">/images/wy_pic1.jpg</span>
<span class="t" style="left:439.27px;top:621.19px;line-height:16px;font-size:11px;color:#808080;letter-spacing:-0.1px;">1,374</span>
<svg style="left:5px;top:638px" width="16" height="14"><use href="#i-img"/></svg>
<span class="t" style="left:22.50px;top:638.19px;line-height:16px;font-size:11px;color:#808080;letter-spacing:-0.1px;">120</span>
<span class="t" style="left:61.42px;top:638.19px;line-height:16px;font-size:11px;color:#808080;letter-spacing:-0.1px;">200</span>
<span class="t" style="left:101.10px;top:638.19px;line-height:16px;font-size:11px;color:#808080;letter-spacing:-1.034px;">HTTP</span>
<span class="t" style="left:165.20px;top:638.19px;line-height:16px;font-size:11px;color:#808080;">www.wandafilm.com</span>
<span class="t" style="left:276.30px;top:638.19px;line-height:16px;font-size:11px;color:#808080;letter-spacing:0.095px;">/images/yxj_bg.png</span>
<span class="t" style="left:439.27px;top:638.19px;line-height:16px;font-size:11px;color:#808080;letter-spacing:-0.1px;">1,146</span>
<svg style="left:5px;top:655px" width="16" height="14"><use href="#i-img"/></svg>
<span class="t" style="left:22.50px;top:655.19px;line-height:16px;font-size:11px;color:#808080;letter-spacing:-0.1px;">121</span>
<span class="t" style="left:61.42px;top:655.19px;line-height:16px;font-size:11px;color:#808080;letter-spacing:-0.1px;">200</span>
<span class="t" style="left:101.10px;top:655.19px;line-height:16px;font-size:11px;color:#808080;letter-spacing:-1.034px;">HTTP</span>
<span class="t" style="left:165.20px;top:655.19px;line-height:16px;font-size:11px;color:#808080;">www.wandafilm.com</span>
<span class="t" style="left:276.30px;top:655.19px;line-height:16px;font-size:11px;color:#808080;letter-spacing:0.129px;">/images/yxj_top.png</span>
<span class="t" style="left:433.14px;top:655.19px;line-height:16px;font-size:11px;color:#808080;letter-spacing:-0.1px;">13,992</span>
<svg style="left:5px;top:672px" width="16" height="14"><use href="#i-img"/></svg>
<span class="t" style="left:22.50px;top:672.19px;line-height:16px;font-size:11px;color:#808080;letter-spacing:-0.1px;">122</span>
<span class="t" style="left:61.42px;top:672.19px;line-height:16px;font-size:11px;color:#808080;letter-spacing:-0.1px;">200</span>
<span class="t" style="left:101.10px;top:672.19px;line-height:16px;font-size:11px;color:#808080;letter-spacing:-1.034px;">HTTP</span>
<span class="t" style="left:165.20px;top:672.19px;line-height:16px;font-size:11px;color:#808080;">www.wandafilm.com</span>
<span class="t" style="left:276.30px;top:672.19px;line-height:16px;font-size:11px;color:#808080;letter-spacing:0.038px;">/images/yxj_l_bg.png</span>
<span class="t" style="left:439.27px;top:672.19px;line-height:16px;font-size:11px;color:#808080;letter-spacing:-0.1px;">1,126</span>
<svg style="left:5px;top:689px" width="16" height="14"><use href="#i-img"/></svg>
<span class="t" style="left:22.50px;top:689.19px;line-height:16px;font-size:11px;color:#808080;letter-spacing:-0.1px;">123</span>
<span class="t" style="left:61.42px;top:689.19px;line-height:16px;font-size:11px;color:#808080;letter-spacing:-0.1px;">200</span>
<span class="t" style="left:101.10px;top:689.19px;line-height:16px;font-size:11px;color:#808080;letter-spacing:-1.034px;">HTTP</span>
<span class="t" style="left:165.20px;top:689.19px;line-height:16px;font-size:11px;color:#808080;">www.wandafilm.com</span>
<span class="t" style="left:276.30px;top:689.19px;line-height:16px;font-size:11px;color:#808080;letter-spacing:0.120px;">/images/yxj_lt.png</span>
<span class="t" style="left:439.27px;top:689.19px;line-height:16px;font-size:11px;color:#808080;letter-spacing:-0.1px;">1,753</span>
<svg style="left:5px;top:706px" width="16" height="14"><use href="#i-img"/></svg>
<span class="t" style="left:22.50px;top:706.19px;line-height:16px;font-size:11px;color:#808080;letter-spacing:-0.1px;">124</span>
<span class="t" style="left:61.42px;top:706.19px;line-height:16px;font-size:11px;color:#808080;letter-spacing:-0.1px;">200</span>
<span class="t" style="left:101.10px;top:706.19px;line-height:16px;font-size:11px;color:#808080;letter-spacing:-1.034px;">HTTP</span>
<span class="t" style="left:165.20px;top:706.19px;line-height:16px;font-size:11px;color:#808080;">www.wandafilm.com</span>
<span class="t" style="left:276.30px;top:706.19px;line-height:16px;font-size:11px;color:#808080;letter-spacing:0.077px;">/images/yxj_l2.png</span>
<span class="t" style="left:439.27px;top:706.19px;line-height:16px;font-size:11px;color:#808080;letter-spacing:-0.1px;">1,055</span>
<svg style="left:5px;top:723px" width="16" height="14"><use href="#i-img"/></svg>
<span class="t" style="left:22.50px;top:723.19px;line-height:16px;font-size:11px;color:#808080;letter-spacing:-0.1px;">125</span>
<span class="t" style="left:61.42px;top:723.19px;line-height:16px;font-size:11px;color:#808080;letter-spacing:-0.1px;">200</span>
<span class="t" style="left:101.10px;top:723.19px;line-height:16px;font-size:11px;color:#808080;letter-spacing:-1.034px;">HTTP</span>
<span class="t" style="left:165.20px;top:723.19px;line-height:16px;font-size:11px;color:#808080;">www.wandafilm.com</span>
<span class="t" style="left:276.30px;top:723.19px;line-height:16px;font-size:11px;color:#808080;letter-spacing:0.077px;">/images/yxj_ul.png</span>
<span class="t" style="left:439.27px;top:723.19px;line-height:16px;font-size:11px;color:#808080;letter-spacing:-0.1px;">4,296</span>
<svg style="left:5px;top:740px" width="16" height="14"><use href="#i-img"/></svg>
<span class="t" style="left:22.50px;top:740.19px;line-height:16px;font-size:11px;color:#808080;letter-spacing:-0.1px;">126</span>
<span class="t" style="left:61.42px;top:740.19px;line-height:16px;font-size:11px;color:#808080;letter-spacing:-0.1px;">200</span>
<span class="t" style="left:101.10px;top:740.19px;line-height:16px;font-size:11px;color:#808080;letter-spacing:-1.034px;">HTTP</span>
<span class="t" style="left:165.20px;top:740.19px;line-height:16px;font-size:11px;color:#808080;">www.wandafilm.com</span>
<span class="t" style="left:276.30px;top:740.19px;line-height:16px;font-size:11px;color:#808080;letter-spacing:0.056px;">/images/yxj_l41.png</span>
<span class="t" style="left:439.27px;top:740.19px;line-height:16px;font-size:11px;color:#808080;letter-spacing:-0.1px;">1,738</span>
<svg style="left:5px;top:757px" width="16" height="14"><use href="#i-img"/></svg>
<span class="t" style="left:22.50px;top:757.19px;line-height:16px;font-size:11px;color:#808080;letter-spacing:-0.1px;">127</span>
<span class="t" style="left:61.42px;top:757.19px;line-height:16px;font-size:11px;color:#808080;letter-spacing:-0.1px;">200</span>
<span class="t" style="left:101.10px;top:757.19px;line-height:16px;font-size:11px;color:#808080;letter-spacing:-1.034px;">HTTP</span>
<span class="t" style="left:165.20px;top:757.19px;line-height:16px;font-size:11px;color:#808080;">www.wandafilm.com</span>
<span class="t" style="left:276.30px;top:757.19px;line-height:16px;font-size:11px;color:#808080;letter-spacing:0.056px;">/images/yxj_lbg.png</span>
<span class="t" style="left:433.14px;top:757.19px;line-height:16px;font-size:11px;color:#808080;letter-spacing:-0.1px;">10,562</span>
<svg style="left:5px;top:774px" width="16" height="14"><use href="#i-img"/></svg>
<span class="t" style="left:22.50px;top:774.19px;line-height:16px;font-size:11px;color:#808080;letter-spacing:-0.1px;">128</span>
<span class="t" style="left:61.42px;top:774.19px;line-height:16px;font-size:11px;color:#808080;letter-spacing:-0.1px;">200</span>
<span class="t" style="left:101.10px;top:774.19px;line-height:16px;font-size:11px;color:#808080;letter-spacing:-1.034px;">HTTP</span>
<span class="t" style="left:165.20px;top:774.19px;line-height:16px;font-size:11px;color:#808080;">www.wandafilm.com</span>
<span class="t" style="left:276.30px;top:774.19px;line-height:16px;font-size:11px;color:#808080;letter-spacing:0.077px;">/images/yxj_l5.png</span>
<span class="t" style="left:448.44px;top:774.19px;line-height:16px;font-size:11px;color:#808080;letter-spacing:-0.1px;">954</span>
<svg style="left:5px;top:791px" width="16" height="14"><use href="#i-img"/></svg>
<span class="t" style="left:22.50px;top:791.19px;line-height:16px;font-size:11px;color:#808080;letter-spacing:-0.1px;">129</span>
<span class="t" style="left:61.42px;top:791.19px;line-height:16px;font-size:11px;color:#808080;letter-spacing:-0.1px;">200</span>
<span class="t" style="left:101.10px;top:791.19px;line-height:16px;font-size:11px;color:#808080;letter-spacing:-1.034px;">HTTP</span>
<span class="t" style="left:165.20px;top:791.19px;line-height:16px;font-size:11px;color:#808080;">www.wandafilm.com</span>
<span class="t" style="left:276.30px;top:791.19px;line-height:16px;font-size:11px;color:#808080;">/images/yxj_img.png</span>
<span class="t" style="left:439.27px;top:791.19px;line-height:16px;font-size:11px;color:#808080;letter-spacing:-0.1px;">1,159</span>
<svg style="left:5px;top:808px" width="16" height="14"><use href="#i-img"/></svg>
<span class="t" style="left:22.50px;top:808.19px;line-height:16px;font-size:11px;color:#808080;letter-spacing:-0.1px;">130</span>
<span class="t" style="left:61.42px;top:808.19px;line-height:16px;font-size:11px;color:#808080;letter-spacing:-0.1px;">200</span>
<span class="t" style="left:101.10px;top:808.19px;line-height:16px;font-size:11px;color:#808080;letter-spacing:-1.034px;">HTTP</span>
<span class="t" style="left:165.20px;top:808.19px;line-height:16px;font-size:11px;color:#808080;">www.wandafilm.com</span>
<span class="t" style="left:276.30px;top:808.19px;line-height:16px;font-size:11px;color:#808080;letter-spacing:-0.015px;">/images/dl-bg.png</span>
<span class="t" style="left:448.44px;top:808.19px;line-height:16px;font-size:11px;color:#808080;letter-spacing:-0.1px;">940</span>
<svg style="left:5px;top:825px" width="16" height="14"><use href="#i-img"/></svg>
<span class="t" style="left:22.50px;top:825.19px;line-height:16px;font-size:11px;color:#808080;letter-spacing:-0.1px;">131</span>
<span class="t" style="left:61.42px;top:825.19px;line-height:16px;font-size:11px;color:#808080;letter-spacing:-0.1px;">200</span>
<span class="t" style="left:101.10px;top:825.19px;line-height:16px;font-size:11px;color:#808080;letter-spacing:-1.034px;">HTTP</span>
<span class="t" style="left:165.20px;top:825.19px;line-height:16px;font-size:11px;color:#808080;">www.wandafilm.com</span>
<span class="t" style="left:276.30px;top:825.19px;line-height:16px;font-size:11px;color:#808080;letter-spacing:-0.023px;">/images/y_wpqib_03.png</span>
<span class="t" style="left:439.27px;top:825.19px;line-height:16px;font-size:11px;color:#808080;letter-spacing:-0.1px;">1,013</span>
<svg style="left:5px;top:842px" width="16" height="14"><use href="#i-img"/></svg>
<span class="t" style="left:22.50px;top:842.19px;line-height:16px;font-size:11px;color:#808080;letter-spacing:-0.1px;">132</span>
<span class="t" style="left:61.42px;top:842.19px;line-height:16px;font-size:11px;color:#808080;letter-spacing:-0.1px;">200</span>
<span class="t" style="left:101.10px;top:842.19px;line-height:16px;font-size:11px;color:#808080;letter-spacing:-1.034px;">HTTP</span>
<span class="t" style="left:165.20px;top:842.19px;line-height:16px;font-size:11px;color:#808080;">www.wandafilm.com</span>
<span class="t" style="left:276.30px;top:842.19px;line-height:16px;font-size:11px;color:#808080;letter-spacing:-0.009px;">/images/y_wqipz_03.jpg</span>
<span class="t" style="left:439.27px;top:842.19px;line-height:16px;font-size:11px;color:#808080;letter-spacing:-0.1px;">4,375</span>
<svg style="left:5px;top:859px" width="16" height="14"><use href="#i-img"/></svg>
<span class="t" style="left:22.50px;top:859.19px;line-height:16px;font-size:11px;color:#808080;letter-spacing:-0.1px;">133</span>
<span class="t" style="left:61.42px;top:859.19px;line-height:16px;font-size:11px;color:#808080;letter-spacing:-0.1px;">200</span>
<span class="t" style="left:101.10px;top:859.19px;line-height:16px;font-size:11px;color:#808080;letter-spacing:-1.034px;">HTTP</span>
<span class="t" style="left:165.20px;top:859.19px;line-height:16px;font-size:11px;color:#808080;">www.wandafilm.com</span>
<span class="t" style="left:276.30px;top:859.19px;line-height:16px;font-size:11px;color:#808080;letter-spacing:-0.092px;">/images/y_wplmz_03.png</span>
<span class="t" style="left:448.44px;top:859.19px;line-height:16px;font-size:11px;color:#808080;letter-spacing:-0.1px;">996</span>
<svg style="left:7px;top:876px" width="12" height="14"><use href="#i-lock"/></svg>
<span class="t" style="left:22.50px;top:876.19px;line-height:16px;font-size:11px;color:#808080;letter-spacing:-0.1px;">134</span>
<span class="t" style="left:61.42px;top:876.19px;line-height:16px;font-size:11px;color:#808080;letter-spacing:-0.1px;">200</span>
<span class="t" style="left:101.10px;top:876.19px;line-height:16px;font-size:11px;color:#808080;letter-spacing:-1.034px;">HTTP</span>
<span class="t" style="left:219.49px;top:876.19px;line-height:16px;font-size:11px;color:#808080;letter-spacing:-0.008px;">Tunnel to</span>
<span class="t" style="left:276.30px;top:876.19px;line-height:16px;font-size:11px;color:#808080;letter-spacing:-0.056px;">hm.baidu.com:443</span>
<span class="t" style="left:460.68px;top:876.19px;line-height:16px;font-size:11px;color:#808080;letter-spacing:-0.1px;">0</span>
<svg style="left:5px;top:892px" width="17" height="16"><use href="#i-js"/></svg>
<span class="t" style="left:22.50px;top:893.19px;line-height:16px;font-size:11px;color:#228b22;letter-spacing:-0.1px;">135</span>
<span class="t" style="left:61.42px;top:893.19px;line-height:16px;font-size:11px;color:#228b22;letter-spacing:-0.1px;">200</span>
<span class="t" style="left:101.10px;top:893.19px;line-height:16px;font-size:11px;color:#228b22;letter-spacing:-1.092px;">HTTPS</span>
<span class="t" style="left:196.99px;top:893.19px;line-height:16px;font-size:11px;color:#228b22;letter-spacing:-0.108px;">hm.baidu.com</span>
<span class="t" style="left:276.30px;top:893.19px;line-height:16px;font-size:11px;color:#228b22;letter-spacing:0.120px;">/h.js?c00dbb491101f727d...</span>
<span class="t" style="left:433.14px;top:893.19px;line-height:16px;font-size:11px;color:#228b22;letter-spacing:-0.1px;">13,270</span>
<span class="t" style="left:478.30px;top:893.19px;line-height:16px;font-size:11px;color:#228b22;letter-spacing:0.021px;">max-ag.</span>
<svg style="left:7px;top:910px" width="12" height="14"><use href="#i-lock"/></svg>
<span class="t" style="left:22.50px;top:910.19px;line-height:16px;font-size:11px;color:#808080;letter-spacing:-0.1px;">136</span>
<span class="t" style="left:61.42px;top:910.19px;line-height:16px;font-size:11px;color:#808080;letter-spacing:-0.1px;">200</span>
<span class="t" style="left:101.10px;top:910.19px;line-height:16px;font-size:11px;color:#808080;letter-spacing:-1.034px;">HTTP</span>
<span class="t" style="left:219.49px;top:910.19px;line-height:16px;font-size:11px;color:#808080;letter-spacing:-0.008px;">Tunnel to</span>
<span class="t" style="left:276.30px;top:910.19px;line-height:16px;font-size:11px;color:#808080;letter-spacing:-0.081px;">hmcdn.baidu.com:443</span>
<span class="t" style="left:439.27px;top:910.19px;line-height:16px;font-size:11px;color:#808080;letter-spacing:-0.1px;">1,615</span>
<svg style="left:5px;top:927px" width="16" height="14"><use href="#i-img"/></svg>
<span class="t" style="left:22.50px;top:927.19px;line-height:16px;font-size:11px;color:#808080;letter-spacing:-0.1px;">137</span>
<span class="t" style="left:61.42px;top:927.19px;line-height:16px;font-size:11px;color:#808080;letter-spacing:-0.1px;">200</span>
<span class="t" style="left:101.10px;top:927.19px;line-height:16px;font-size:11px;color:#808080;letter-spacing:-1.092px;">HTTPS</span>
<span class="t" style="left:196.99px;top:927.19px;line-height:16px;font-size:11px;color:#808080;letter-spacing:-0.108px;">hm.baidu.com</span>
<span class="t" style="left:276.30px;top:927.19px;line-height:16px;font-size:11px;color:#808080;letter-spacing:0.126px;">/hm.gif?cc=1&amp;ck=1&amp;cl=2...</span>
<span class="t" style="left:454.55px;top:927.19px;line-height:16px;font-size:11px;color:#808080;letter-spacing:-0.1px;">43</span>
<span class="t" style="left:478.30px;top:927.19px;line-height:16px;font-size:11px;color:#808080;letter-spacing:0.273px;">private..</span>
<svg style="left:5px;top:944px" width="16" height="14"><use href="#i-img"/></svg>
<span class="t" style="left:22.50px;top:944.19px;line-height:16px;font-size:11px;color:#808080;letter-spacing:-0.1px;">138</span>
<span class="t" style="left:61.42px;top:944.19px;line-height:16px;font-size:11px;color:#808080;letter-spacing:-0.1px;">200</span>
<span class="t" style="left:101.10px;top:944.19px;line-height:16px;font-size:11px;color:#808080;letter-spacing:-1.092px;">HTTPS</span>
<span class="t" style="left:179.59px;top:944.19px;line-height:16px;font-size:11px;color:#808080;letter-spacing:-0.109px;">hmcdn.baidu.com</span>
<span class="t" style="left:276.30px;top:944.19px;line-height:16px;font-size:11px;color:#808080;letter-spacing:0.212px;">/static/hmt/icon/21.gif</span>
<span class="t" style="left:440.08px;top:944.19px;line-height:16px;font-size:11px;color:#808080;letter-spacing:-0.1px;">1,119</span>
<svg style="left:5px;top:961px" width="16" height="14"><use href="#i-img"/></svg>
<span class="t" style="left:22.50px;top:961.19px;line-height:16px;font-size:11px;color:#808080;letter-spacing:-0.1px;">139</span>
<span class="t" style="left:61.42px;top:961.19px;line-height:16px;font-size:11px;color:#808080;letter-spacing:-0.1px;">200</span>
<span class="t" style="left:101.10px;top:961.19px;line-height:16px;font-size:11px;color:#808080;letter-spacing:-1.034px;">HTTP</span>
<span class="t" style="left:165.20px;top:961.19px;line-height:16px;font-size:11px;color:#808080;">www.wandafilm.com</span>
<span class="t" style="left:276.30px;top:961.19px;line-height:16px;font-size:11px;color:#808080;letter-spacing:-0.024px;">/images/favicon.ico</span>
<span class="t" style="left:427.03px;top:961.19px;line-height:16px;font-size:11px;color:#808080;letter-spacing:-0.1px;">161,862</span>
<div style="left:9px;top:978px;width:6px;height:2px;background:#e8402a;border-radius:3px 3px 0 0;"></div>
<svg style="left:523.5px;top:75.5px" width="9" height="7" viewBox="0 0 9 7"><path d="M0.6 5.2 L4.5 1.4 L8.4 5.2" fill="none" stroke="#606060" stroke-width="1.9"/></svg>
<svg style="left:523.5px;top:966.5px" width="9" height="7" viewBox="0 0 9 7"><path d="M0.6 1.2 L4.5 5 L8.4 1.2" fill="none" stroke="#606060" stroke-width="1.9"/></svg>
<svg style="left:4.5px;top:983.5px" width="7" height="9" viewBox="0 0 7 9"><path d="M5.2 0.6 L1.4 4.5 L5.2 8.4" fill="none" stroke="#606060" stroke-width="1.9"/></svg>
<svg style="left:507.5px;top:983.5px" width="7" height="9" viewBox="0 0 7 9"><path d="M1.2 0.6 L5 4.5 L1.2 8.4" fill="none" stroke="#606060" stroke-width="1.9"/></svg>
<span class="t" style="left:3.10px;top:999.19px;line-height:16px;font-size:11px;color:#46525a;letter-spacing:-0.111px;">[QuickExec] ALT+Q &gt; type HELP to learn more</span>
<svg style="left:2px;top:1021px" width="17" height="17" viewBox="0 0 17 17"><path d="M1.2 0.1l1.5 1.5l-1.5 1.5l-1.5 -1.5z" fill="none" stroke="#000" stroke-width="0.8"/><rect x="4.0" y="0.1" width="1" height="3" fill="#000"/><path d="M7.8 0.1l1.5 1.5l-1.5 1.5l-1.5 -1.5z" fill="none" stroke="#000" stroke-width="0.8"/><rect x="10.6" y="0.1" width="1" height="3" fill="#000"/><path d="M14.4 0.1l1.5 1.5l-1.5 1.5l-1.5 -1.5z" fill="none" stroke="#000" stroke-width="0.8"/><path d="M1.2 4.2l1.5 1.5l-1.5 1.5l-1.5 -1.5z" fill="none" stroke="#000" stroke-width="0.8"/><rect x="4.0" y="4.2" width="1" height="3" fill="#000"/><path d="M7.8 4.2l1.5 1.5l-1.5 1.5l-1.5 -1.5z" fill="none" stroke="#000" stroke-width="0.8"/><rect x="10.6" y="4.2" width="1" height="3" fill="#000"/><path d="M14.4 4.2l1.5 1.5l-1.5 1.5l-1.5 -1.5z" fill="none" stroke="#000" stroke-width="0.8"/><path d="M1.2 8.3l1.5 1.5l-1.5 1.5l-1.5 -1.5z" fill="none" stroke="#000" stroke-width="0.8"/><rect x="4.0" y="8.3" width="1" height="3" fill="#000"/><path d="M7.8 8.3l1.5 1.5l-1.5 1.5l-1.5 -1.5z" fill="none" stroke="#000" stroke-width="0.8"/><path d="M1.2 12.4l1.5 1.5l-1.5 1.5l-1.5 -1.5z" fill="none" stroke="#000" stroke-width="0.8"/><rect x="4.0" y="12.4" width="1" height="3" fill="#000"/><path d="M7.8 12.4l1.5 1.5l-1.5 1.5l-1.5 -1.5z" fill="none" stroke="#000" stroke-width="0.8"/><path d="M15.6 5.6 L10 10.2 L12.8 10.8 L8.6 16.2 L10 11.8 L7.6 11.4 L11.6 6.2Z" fill="#f01010" stroke="#c00000" stroke-width="0.6"/></svg>
<span class="t" style="left:21.30px;top:1022.19px;line-height:16px;font-size:11px;color:#000;letter-spacing:-0.011px;">Capturing</span>
<svg style="left:88.5px;top:1021px" width="17" height="17" viewBox="0 0 17 17"><defs><linearGradient id="gie" x1="0" y1="0" x2="0.3" y2="1"><stop offset="0" stop-color="#45b4ff"/><stop offset="0.55" stop-color="#0a74e8"/><stop offset="1" stop-color="#1aa0f4"/></linearGradient></defs><path d="M9 1.8 a6.5 6.5 0 1 0 6.1 8.9 h-3.5 a3.1 3.1 0 0 1 -5.5 -1.3 h9.4 a6.5 6.5 0 0 0 -6.5 -7.6z M6.1 7 a3 3 0 0 1 5.8 0z" fill="url(#gie)" stroke="#0a4db8" stroke-width="0.4"/><path d="M2.4 16.2 C-1.8 11.4 5 3.2 11 1.4 C14.6 0.2 16.8 1.6 15.2 4.6" fill="none" stroke="#f4b61c" stroke-width="1.5"/></svg>
<span class="t" style="left:108.10px;top:1022.19px;line-height:16px;font-size:11px;color:#000;letter-spacing:-0.119px;">Web Browsers</span>
<span class="t" style="left:236.50px;top:1022.19px;line-height:16px;font-size:11px;color:#000;letter-spacing:0.108px;">1 / 1,172</span>
<span class="t" style="left:299.90px;top:1022.19px;line-height:16px;font-size:11px;color:#000;letter-spacing:0.258px;">http://localhost:8000/</span>
<div style="left:84px;top:1020px;width:1px;height:19px;background:#d7d7d7;"></div>
<div style="left:85px;top:1020px;width:1px;height:19px;background:#fdfdfd;"></div>
<div style="left:194px;top:1020px;width:1px;height:19px;background:#d7d7d7;"></div>
<div style="left:195px;top:1020px;width:1px;height:19px;background:#fdfdfd;"></div>
<div style="left:216px;top:1020px;width:1px;height:19px;background:#d7d7d7;"></div>
<div style="left:217px;top:1020px;width:1px;height:19px;background:#fdfdfd;"></div>
<div style="left:296px;top:1020px;width:1px;height:19px;background:#d7d7d7;"></div>
<div style="left:297px;top:1020px;width:1px;height:19px;background:#fdfdfd;"></div>
<div style="left:1916px;top:1030px;width:2px;height:2px;background:#bcbcbc;"></div>
<div style="left:1913px;top:1033px;width:2px;height:2px;background:#bcbcbc;"></div>
<div style="left:1916px;top:1033px;width:2px;height:2px;background:#bcbcbc;"></div>
<div style="left:1910px;top:1036px;width:2px;height:2px;background:#bcbcbc;"></div>
<div style="left:1913px;top:1036px;width:2px;height:2px;background:#bcbcbc;"></div>
<div style="left:1916px;top:1036px;width:2px;height:2px;background:#bcbcbc;"></div>
<div style="left:0px;top:1039px;width:1920px;height:1px;background:#fff;"></div>
<div style="left:1920px;top:1038px;width:8px;height:1px;background:#fff;"></div>
<div style="left:1920px;top:1039px;width:8px;height:1px;background:#000;"></div>
<span class="t" style="left:1867.50px;top:1040.34px;line-height:18px;font-size:12px;color:#fff;letter-spacing:0.394px;">21:52</span>
<div style="left:542px;top:70px;width:76px;height:20px;background:#d9d9d9;"></div>
<div style="left:543px;top:71px;width:74px;height:18px;background:#f0f0f0;"></div>
<div style="left:706px;top:70px;width:108px;height:20px;background:#d9d9d9;"></div>
<div style="left:707px;top:71px;width:106px;height:18px;background:#f0f0f0;"></div>
<div style="left:813px;top:70px;width:83px;height:20px;background:#d9d9d9;"></div>
<div style="left:814px;top:71px;width:81px;height:18px;background:#f0f0f0;"></div>
<div style="left:895px;top:70px;width:143px;height:20px;background:#d9d9d9;"></div>
<div style="left:896px;top:71px;width:141px;height:18px;background:#f0f0f0;"></div>
<div style="left:1037px;top:70px;width:93px;height:20px;background:#d9d9d9;"></div>
<div style="left:1038px;top:71px;width:91px;height:18px;background:#f0f0f0;"></div>
<div style="left:1129px;top:70px;width:53px;height:20px;background:#d9d9d9;"></div>
<div style="left:1130px;top:71px;width:51px;height:18px;background:#f0f0f0;"></div>
<div style="left:1181px;top:70px;width:64px;height:20px;background:#d9d9d9;"></div>
<div style="left:1182px;top:71px;width:62px;height:18px;background:#f0f0f0;"></div>
<div style="left:1244px;top:70px;width:71px;height:20px;background:#d9d9d9;"></div>
<div style="left:1245px;top:71px;width:69px;height:18px;background:#f0f0f0;"></div>
<div style="left:617px;top:68px;width:89px;height:23px;background:#d9d9d9;"></div>
<div style="left:618px;top:69px;width:87px;height:22px;background:#fff;"></div>
<span class="t" style="left:569.20px;top:73.19px;line-height:16px;font-size:11px;color:#000;letter-spacing:-0.032px;">Statistics</span>
<span class="t" style="left:646.20px;top:71.19px;line-height:16px;font-size:11px;color:#000;letter-spacing:0.115px;">Inspectors</span>
<span class="t" style="left:731.40px;top:73.19px;line-height:16px;font-size:11px;color:#000;letter-spacing:-0.127px;">AutoResponder</span>
<span class="t" style="left:840.10px;top:73.19px;line-height:16px;font-size:11px;color:#000;letter-spacing:-0.294px;">Composer</span>
<span class="t" style="left:922.00px;top:73.19px;line-height:16px;font-size:11px;color:#000;letter-spacing:-0.080px;">Fiddler Orchestra Beta</span>
<span class="t" style="left:1064.00px;top:73.19px;line-height:16px;font-size:11px;color:#000;letter-spacing:-0.112px;">FiddlerScript</span>
<span class="t" style="left:1157.10px;top:73.19px;line-height:16px;font-size:11px;color:#000;letter-spacing:-0.186px;">Log</span>
<span class="t" style="left:1208.00px;top:73.19px;line-height:16px;font-size:11px;color:#000;letter-spacing:-0.008px;">Filters</span>
<span class="t" style="left:1271.50px;top:73.19px;line-height:16px;font-size:11px;color:#000;letter-spacing:-0.359px;">Timeline</span>
<svg style="left:548.5px;top:72px" width="17" height="17" viewBox="0 0 17 17"><path d="M6.4 1.6h3.2M8 1.6v2" stroke="#000" stroke-width="1.3"/><path d="M8 2.6 L12.6 4.4 L15 8.6 L13.6 13.6 L10 16 H6 L2.4 13.6 L1 8.6 L3.4 4.4Z" fill="#fff" stroke="#000" stroke-width="1.1"/><rect x="12.40" y="8.60" width="1.2" height="1.2" fill="#19d8e8"/><rect x="11.73" y="11.10" width="1.2" height="1.2" fill="#19d8e8"/><rect x="9.90" y="12.93" width="1.2" height="1.2" fill="#19d8e8"/><rect x="7.40" y="13.60" width="1.2" height="1.2" fill="#19d8e8"/><rect x="4.90" y="12.93" width="1.2" height="1.2" fill="#19d8e8"/><rect x="3.07" y="11.10" width="1.2" height="1.2" fill="#19d8e8"/><rect x="2.40" y="8.60" width="1.2" height="1.2" fill="#19d8e8"/><rect x="3.07" y="6.10" width="1.2" height="1.2" fill="#19d8e8"/><rect x="4.90" y="4.27" width="1.2" height="1.2" fill="#19d8e8"/><rect x="7.40" y="3.60" width="1.2" height="1.2" fill="#19d8e8"/><rect x="9.90" y="4.27" width="1.2" height="1.2" fill="#19d8e8"/><rect x="11.73" y="6.10" width="1.2" height="1.2" fill="#19d8e8"/><path d="M8.3 9.3V5.6M8.3 9.3L5.2 6.2" stroke="#000" stroke-width="1.1"/><path d="M8 9.6L4.4 13.2" stroke="#f00" stroke-width="1"/></svg>
<svg style="left:625px;top:70px" width="17" height="17" viewBox="0 0 17 17"><rect x="1.0" y="0.6" width="1.1" height="1.1" fill="#555"/><rect x="1.0" y="13.6" width="1.1" height="1.1" fill="#555"/><rect x="3.6" y="0.6" width="1.1" height="1.1" fill="#555"/><rect x="3.6" y="13.6" width="1.1" height="1.1" fill="#555"/><rect x="6.2" y="0.6" width="1.1" height="1.1" fill="#555"/><rect x="6.2" y="13.6" width="1.1" height="1.1" fill="#555"/><rect x="8.8" y="0.6" width="1.1" height="1.1" fill="#555"/><rect x="8.8" y="13.6" width="1.1" height="1.1" fill="#555"/><rect x="11.4" y="0.6" width="1.1" height="1.1" fill="#555"/><rect x="11.4" y="13.6" width="1.1" height="1.1" fill="#555"/><rect x="14.0" y="0.6" width="1.1" height="1.1" fill="#555"/><rect x="14.0" y="13.6" width="1.1" height="1.1" fill="#555"/><rect x="0.6" y="1.0" width="1.1" height="1.1" fill="#555"/><rect x="13.6" y="1.0" width="1.1" height="1.1" fill="#555"/><rect x="0.6" y="3.6" width="1.1" height="1.1" fill="#555"/><rect x="13.6" y="3.6" width="1.1" height="1.1" fill="#555"/><rect x="0.6" y="6.2" width="1.1" height="1.1" fill="#555"/><rect x="13.6" y="6.2" width="1.1" height="1.1" fill="#555"/><rect x="0.6" y="8.8" width="1.1" height="1.1" fill="#555"/><rect x="13.6" y="8.8" width="1.1" height="1.1" fill="#555"/><rect x="0.6" y="11.4" width="1.1" height="1.1" fill="#555"/><rect x="13.6" y="11.4" width="1.1" height="1.1" fill="#555"/><rect x="0.6" y="14.0" width="1.1" height="1.1" fill="#555"/><rect x="13.6" y="14.0" width="1.1" height="1.1" fill="#555"/><path d="M10.4 10.4 L15.2 15" stroke="#c07a30" stroke-width="2.4" stroke-linecap="round"/><circle cx="6.8" cy="6.8" r="5" fill="#d6ecfc" stroke="#a4cdee" stroke-width="1.4"/><circle cx="5.6" cy="5.4" r="2" fill="#fff" opacity="0.8"/></svg>
<svg style="left:712px;top:73px" width="14" height="16" viewBox="0 0 14 16"><path d="M6.6 1 H12.8 L8.2 6.6 H11.2 L1.8 15 L5 8.6 H2.6Z" fill="#7e7e7e"/><path d="M12 7.2 L4 14.6" stroke="#fff" stroke-width="0.7" stroke-dasharray="0.8 0.8"/></svg>
<svg style="left:819px;top:72px" width="17" height="17" viewBox="0 0 17 17"><rect x="1" y="1.4" width="11.4" height="13.6" fill="#f4f7fc" stroke="#7a9cd0" stroke-width="1"/><rect x="1.5" y="1.9" width="10.4" height="3" fill="#dbe6f6"/><path d="M3 12.4h7" stroke="#b8c8e0" stroke-width="0.9"/><path d="M5.4 10.2 L13.4 2.2 L15.4 4 L7.6 12 L4.8 12.8Z" fill="#ecc050" stroke="#9a6a2a" stroke-width="0.6"/><path d="M13.4 2.2l2 1.8l0.8 -1.2l-1.6 -1.6z" fill="#d85050"/><path d="M5.4 10.2l-0.6 2.6l2.8 -0.8z" fill="#5a4630"/></svg>
<div style="left:901px;top:72px;width:16px;height:16px;background:#2cb34a;"></div>
<span class="t" style="left:902.10px;top:73.71px;line-height:14px;font-size:9.5px;color:#fff;letter-spacing:-0.302px;font-weight:700;">FO</span>
<svg style="left:1042.5px;top:72px" width="17" height="16"><use href="#i-js"/></svg>
<svg style="left:1137px;top:73px" width="13" height="14" viewBox="0 0 13 14"><rect x="1" y="0.8" width="10.4" height="12.2" rx="0.8" fill="#fff" stroke="#555" stroke-width="1.1"/><path d="M3.4 4h5.6M3.4 6.2h5.6M3.4 8.4h5.6M3.4 10.6h5.6" stroke="#777" stroke-width="0.9"/></svg>
<svg style="left:1188px;top:73px" width="15" height="15" viewBox="0 0 15 15"><defs><linearGradient id="gf" x1="0" y1="0" x2="1" y2="1"><stop offset="0" stop-color="#d8d8d8"/><stop offset="1" stop-color="#fdfdfd"/></linearGradient></defs><rect x="1" y="1" width="12.4" height="12.4" fill="url(#gf)" stroke="#2c5fa8" stroke-width="1.2"/></svg>
<svg style="left:1249px;top:73px" width="18" height="14" viewBox="0 0 18 14"><rect x="1" y="1.4" width="11.6" height="1.6" fill="#1e78f0"/><rect x="4.6" y="6.4" width="12" height="1.6" fill="#800080"/><rect x="1" y="11.2" width="9.6" height="1.6" fill="#18e0e8"/><rect x="14.4" y="11.2" width="2.2" height="1.8" fill="#20d020"/></svg>
<span class="t" style="left:548.50px;top:92.19px;line-height:16px;font-size:11px;color:#000;letter-spacing:-0.040px;">Headers</span>
<span class="t" style="left:610.50px;top:92.19px;line-height:16px;font-size:11px;color:#000;letter-spacing:0.184px;">TextView</span>
<span class="t" style="left:676.80px;top:92.19px;line-height:16px;font-size:11px;color:#000;letter-spacing:-0.028px;">SyntaxView</span>
<span class="t" style="left:755.20px;top:92.19px;line-height:16px;font-size:11px;color:#000;letter-spacing:-0.224px;">WebForms</span>
<span class="t" style="left:827.50px;top:92.19px;line-height:16px;font-size:11px;color:#000;letter-spacing:-0.131px;">HexView</span>
<span class="t" style="left:891.20px;top:92.19px;line-height:16px;font-size:11px;color:#000;letter-spacing:0.165px;">Auth</span>
<span class="t" style="left:943.10px;top:92.19px;line-height:16px;font-size:11px;color:#000;letter-spacing:-0.236px;">Cookies</span>
<span class="t" style="left:1054.40px;top:92.19px;line-height:16px;font-size:11px;color:#000;letter-spacing:-0.661px;">JSON</span>
<span class="t" style="left:1105.70px;top:92.19px;line-height:16px;font-size:11px;color:#000;letter-spacing:-0.942px;">XML</span>
<div style="left:600px;top:91px;width:1px;height:18px;background:#a0a0a0;"></div>
<div style="left:666px;top:91px;width:1px;height:18px;background:#a0a0a0;"></div>
<div style="left:744px;top:91px;width:1px;height:18px;background:#a0a0a0;"></div>
<div style="left:817px;top:91px;width:1px;height:18px;background:#a0a0a0;"></div>
<div style="left:880px;top:91px;width:1px;height:18px;background:#a0a0a0;"></div>
<div style="left:932px;top:91px;width:1px;height:18px;background:#a0a0a0;"></div>
<div style="left:991px;top:91px;width:1px;height:18px;background:#a0a0a0;"></div>
<div style="left:1043px;top:91px;width:1px;height:18px;background:#a0a0a0;"></div>
<div style="left:1095px;top:91px;width:1px;height:18px;background:#a0a0a0;"></div>
<div style="left:1147px;top:91px;width:1px;height:18px;background:#a0a0a0;"></div>
<div style="left:997px;top:91px;width:41px;height:17px;background:#f8f8f8;"></div>
<div style="left:997px;top:91px;width:41px;height:1px;background:#696969;"></div>
<div style="left:997px;top:91px;width:1px;height:17px;background:#696969;"></div>
<div style="left:998px;top:92px;width:40px;height:1px;background:#a0a0a0;"></div>
<div style="left:998px;top:92px;width:1px;height:16px;background:#a0a0a0;"></div>
<div style="left:1038px;top:91px;width:1px;height:18px;background:#fff;"></div>
<div style="left:997px;top:108px;width:41px;height:1px;background:#fff;"></div>
<span class="t" style="left:1002.50px;top:93.19px;line-height:16px;font-size:11px;color:#000;letter-spacing:-0.005px;">Raw</span>
<span class="t" style="left:548.80px;top:719.19px;line-height:16px;font-size:11px;color:#000;">Transformer</span>
<span class="t" style="left:629.70px;top:719.19px;line-height:16px;font-size:11px;color:#000;letter-spacing:-0.068px;">Headers</span>
<span class="t" style="left:692.00px;top:719.19px;line-height:16px;font-size:11px;color:#000;letter-spacing:0.084px;">TextView</span>
<span class="t" style="left:758.00px;top:719.19px;line-height:16px;font-size:11px;color:#000;letter-spacing:-0.048px;">SyntaxView</span>
<span class="t" style="left:836.20px;top:719.19px;line-height:16px;font-size:11px;color:#000;letter-spacing:-0.213px;">ImageView</span>
<span class="t" style="left:909.70px;top:719.19px;line-height:16px;font-size:11px;color:#000;letter-spacing:-0.174px;">HexView</span>
<span class="t" style="left:973.10px;top:719.19px;line-height:16px;font-size:11px;color:#000;letter-spacing:-0.209px;">WebView</span>
<span class="t" style="left:1039.10px;top:719.19px;line-height:16px;font-size:11px;color:#000;letter-spacing:0.290px;">Auth</span>
<span class="t" style="left:1090.80px;top:719.19px;line-height:16px;font-size:11px;color:#000;letter-spacing:-0.194px;">Caching</span>
<span class="t" style="left:1151.00px;top:719.19px;line-height:16px;font-size:11px;color:#000;letter-spacing:-0.264px;">Cookies</span>
<span class="t" style="left:1262.00px;top:719.19px;line-height:16px;font-size:11px;color:#000;letter-spacing:-0.511px;">JSON</span>
<span class="t" style="left:1314.10px;top:719.19px;line-height:16px;font-size:11px;color:#000;letter-spacing:-1.075px;">XML</span>
<div style="left:619px;top:718px;width:1px;height:18px;background:#a0a0a0;"></div>
<div style="left:681px;top:718px;width:1px;height:18px;background:#a0a0a0;"></div>
<div style="left:747px;top:718px;width:1px;height:18px;background:#a0a0a0;"></div>
<div style="left:825px;top:718px;width:1px;height:18px;background:#a0a0a0;"></div>
<div style="left:899px;top:718px;width:1px;height:18px;background:#a0a0a0;"></div>
<div style="left:962px;top:718px;width:1px;height:18px;background:#a0a0a0;"></div>
<div style="left:1028px;top:718px;width:1px;height:18px;background:#a0a0a0;"></div>
<div style="left:1080px;top:718px;width:1px;height:18px;background:#a0a0a0;"></div>
<div style="left:1140px;top:718px;width:1px;height:18px;background:#a0a0a0;"></div>
<div style="left:1199px;top:718px;width:1px;height:18px;background:#a0a0a0;"></div>
<div style="left:1251px;top:718px;width:1px;height:18px;background:#a0a0a0;"></div>
<div style="left:1303px;top:718px;width:1px;height:18px;background:#a0a0a0;"></div>
<div style="left:1355px;top:718px;width:1px;height:18px;background:#a0a0a0;"></div>
<div style="left:1205.5px;top:718px;width:40.299999999999955px;height:17px;background:#f8f8f8;"></div>
<div style="left:1205.5px;top:718px;width:40.299999999999955px;height:1px;background:#696969;"></div>
<div style="left:1205.5px;top:718px;width:1px;height:17px;background:#696969;"></div>
<div style="left:1206.5px;top:719px;width:39.299999999999955px;height:1px;background:#a0a0a0;"></div>
<div style="left:1206.5px;top:719px;width:1px;height:16px;background:#a0a0a0;"></div>
<div style="left:1245.8px;top:718px;width:1px;height:18px;background:#fff;"></div>
<div style="left:1205.5px;top:735px;width:40.299999999999955px;height:1px;background:#fff;"></div>
<span class="t" style="left:1210.50px;top:720.19px;line-height:16px;font-size:11px;color:#000;letter-spacing:0.128px;">Raw</span>
<span class="t" style="left:555.00px;top:690.19px;line-height:16px;font-size:11px;color:#6d6d6d;letter-spacing:0.022px;">Find... (press Ctrl+Enter to highlight all)</span>
<span class="t" style="left:1819.90px;top:691.19px;line-height:16px;font-size:11px;color:#000;letter-spacing:0.173px;">View in Notepad</span>
<span class="t" style="left:555.00px;top:989.19px;line-height:16px;font-size:11px;color:#6d6d6d;letter-spacing:0.022px;">Find... (press Ctrl+Enter to highlight all)</span>
<span class="t" style="left:1819.90px;top:990.19px;line-height:16px;font-size:11px;color:#000;letter-spacing:0.173px;">View in Notepad</span>
<svg style="left:1897.5px;top:120.5px" width="9" height="7" viewBox="0 0 9 7"><path d="M0.6 5.2 L4.5 1.4 L8.4 5.2" fill="none" stroke="#606060" stroke-width="1.9"/></svg>
<svg style="left:1897.5px;top:657.5px" width="9" height="7" viewBox="0 0 9 7"><path d="M0.6 1.2 L4.5 5 L8.4 1.2" fill="none" stroke="#606060" stroke-width="1.9"/></svg>
<svg style="left:554.5px;top:674px" width="7" height="9" viewBox="0 0 7 9"><path d="M5.2 0.6 L1.4 4.5 L5.2 8.4" fill="none" stroke="#606060" stroke-width="1.9"/></svg>
<svg style="left:1881.5px;top:674px" width="7" height="9" viewBox="0 0 7 9"><path d="M1.2 0.6 L5 4.5 L1.2 8.4" fill="none" stroke="#606060" stroke-width="1.9"/></svg>
<span class="m" style="left:551.0px;top:112.90px;">POST</span>
<span class="m lk" style="left:586.0px;top:112.90px;">http://localhost:8000/</span>
<span class="m" style="left:747.0px;top:112.90px;">HTTP/1.1</span>
<span class="m" style="left:551.0px;top:123.90px;">Host: localhost:8000</span>
<span class="m" style="left:551.0px;top:134.90px;">Connection: keep-alive</span>
<span class="m" style="left:551.0px;top:145.90px;">Content-Length: 62782</span>
<span class="m" style="left:551.0px;top:156.90px;">Pragma: no-cache</span>
<span class="m" style="left:551.0px;top:167.90px;">Cache-Control: no-cache</span>
<span class="m" style="left:551.0px;top:178.90px;">Origin:</span>
<span class="m lk" style="left:607.0px;top:178.90px;">http://localhost:8899</span>
<span class="m" style="left:551.0px;top:189.90px;">Upgrade-Insecure-Requests: 1</span>
<span class="m" style="left:551.0px;top:200.90px;">Content-Type: multipart/form-data; boundary=----WebKitFormBoundaryDSsdNIpJctA59kGR</span>
<span class="m" style="left:551.0px;top:211.90px;">User-Agent: Mozilla/5.0 (Windows NT 10.0; Win64; x64) AppleWebKit/537.36 (KHTML, like Gecko) Chrome/78.0.3904.97 Safari/537.36</span>
<span class="m" style="left:551.0px;top:222.90px;">Sec-Fetch-User: ?1</span>
<span class="m" style="left:551.0px;top:233.90px;">Accept: text/html,application/xhtml+xml,application/xml;q=0.9,image/webp,image/apng,*/*;q=0.8,application/signed-exchange;v=b3</span>
<span class="m" style="left:551.0px;top:244.90px;">Sec-Fetch-Site: same-site</span>
<span class="m" style="left:551.0px;top:255.90px;">Sec-Fetch-Mode: navigate</span>
<span class="m" style="left:551.0px;top:266.90px;">Referer:</span>
<span class="m lk" style="left:614.0px;top:266.90px;">http://localhost:8899/nodejs/%E4%BB%A3%E7%A0%81/4-HTTP/client.html?_ijt=24j02190ceq1r9fcb3nu9oulr2</span>
<span class="m" style="left:551.0px;top:277.90px;">Accept-Encoding: gzip, deflate, br</span>
<span class="m" style="left:551.0px;top:288.90px;">Accept-Language: zh-CN,zh;q=0.9,en;q=0.8,la;q=0.7</span>
<span class="m" style="left:551.0px;top:299.90px;">Cookie: Webstorm-cb6d6779=07924c07-514b-4ad9-93e7-2be9dd1c1ca6; Phpstorm-69758c9d=6fbac80a-a7cc-489b-936f-cef7f1b668a7; __utma=111872281.44771604.1572685721.1572685721.1572685721.1; __utmz=111</span>
<span class="m" style="left:551.0px;top:321.90px;">------WebKitFormBoundaryDSsdNIpJctA59kGR</span>
<span class="m" style="left:551.0px;top:332.90px;">Content-Disposition: form-data; name="username"</span>
<span class="m" style="left:551.0px;top:354.90px;">sdfsa</span>
<span class="m" style="left:551.0px;top:365.90px;">------WebKitFormBoundaryDSsdNIpJctA59kGR</span>
<span class="m" style="left:551.0px;top:376.90px;">Content-Disposition: form-data; name="password"</span>
<span class="m" style="left:551.0px;top:398.90px;">asdfasdfa</span>
<span class="m" style="left:551.0px;top:409.90px;">------WebKitFormBoundaryDSsdNIpJctA59kGR</span>
<span class="m" style="left:551.0px;top:420.90px;">Content-Disposition: form-data; name="file"; filename="html5-css3.png"</span>
<span class="m" style="left:551.0px;top:431.90px;">Content-Type: image/png</span>
<div class="tf" style="left:551.0px;top:458.5px;width:7.0px;"></div>
<span class="m" style="left:558.0px;top:453.90px;">PNG</span>
<div class="tf" style="left:551.0px;top:469.5px;width:7.0px;"></div>
<div class="tf" style="left:551.0px;top:480.5px;width:21.0px;"></div>
<div class="tf" style="left:579.0px;top:493.5px;width:21.0px;"></div>
<div class="tf" style="left:607.0px;top:493.5px;width:21.0px;"></div>
<div class="tf" style="left:635.0px;top:493.5px;width:35.0px;"></div>
<span class="m" style="left:551.0px;top:488.90px;">IHDR   t   K</span>
<div class="tf" style="left:695.0px;top:493.5px;width:7.0px;"></div>
<div class="tf" style="left:709.0px;top:493.5px;width:35.0px;"></div>
<div class="tf" style="left:828.0px;top:493.5px;width:7.0px;"></div>
<div class="tf" style="left:954.0px;top:493.5px;width:7.0px;"></div>
<div class="tf" style="left:975.0px;top:493.5px;width:21.0px;"></div>
<div class="tf" style="left:1150.0px;top:493.5px;width:35.0px;"></div>
<span class="m" style="left:702.0px;top:488.90px;">V     tEXtSoftware Adobe ImageReadyq e&lt;   "iTXtXML:com.adobe.xmp     &lt;?xpacket begin="" id="W5M0MpCehiHzreSzNTczkc9d"?&gt; &lt;x:xmpmeta xmlns:x="adobe:ns:meta/" x:xmptk="Adobe</span>
<div class="tf" style="left:572.0px;top:509.5px;width:28.0px;"></div>
<div class="tf" style="left:635.0px;top:509.5px;width:28.0px;"></div>
<div class="tf" style="left:670.0px;top:509.5px;width:14.0px;"></div>
<div class="tf" style="left:691.0px;top:509.5px;width:7.0px;"></div>
<div class="tf" style="left:705.0px;top:509.5px;width:14.0px;"></div>
<div class="tf" style="left:726.0px;top:509.5px;width:42.0px;"></div>
<div class="tf" style="left:775.0px;top:509.5px;width:7.0px;"></div>
<div class="tf" style="left:803.0px;top:509.5px;width:56.0px;"></div>
<div class="tf" style="left:873.0px;top:509.5px;width:21.0px;"></div>
<div class="tf" style="left:908.0px;top:509.5px;width:49.0px;"></div>
<div class="tf" style="left:964.0px;top:509.5px;width:21.0px;"></div>
<span class="m" style="left:551.0px;top:504.90px;">Ns8    R]{no    {  U Y  x      : UVf        s϶   o+           1</span>
<div class="tf" style="left:992.0px;top:509.5px;width:7.0px;"></div>
<div class="tf" style="left:999.0px;top:509.5px;width:7.0px;"></div>
<div class="tf" style="left:1006.0px;top:509.5px;width:7.0px;"></div>
<div class="tf" style="left:1013.0px;top:509.5px;width:7.0px;"></div>
<div class="tf" style="left:1019.0px;top:509.5px;width:7.0px;"></div>
<div class="tf" style="left:1026.0px;top:509.5px;width:7.0px;"></div>
<div class="tf" style="left:1033.0px;top:509.5px;width:7.0px;"></div>
<div class="tf" style="left:1040.0px;top:509.5px;width:7.0px;"></div>
<div class="tf" style="left:1047.0px;top:509.5px;width:7.0px;"></div>
<div class="tf" style="left:1054.0px;top:509.5px;width:7.0px;"></div>
<div class="tf" style="left:1061.0px;top:509.5px;width:7.0px;"></div>
<div class="tf" style="left:1067.0px;top:509.5px;width:7.0px;"></div>
<div class="tf" style="left:1074.0px;top:509.5px;width:7.0px;"></div>
<div class="tf" style="left:1081.0px;top:509.5px;width:7.0px;"></div>
<div class="tf" style="left:1095.0px;top:509.5px;width:63.0px;"></div>
<div class="tf" style="left:1165.0px;top:509.5px;width:56.0px;"></div>
<div class="tf" style="left:1228.0px;top:509.5px;width:70.0px;"></div>
<span class="m" style="left:1088.0px;top:504.90px;">q         W        q</span>
<svg style="left:957px;top:505px" width="8" height="13"><path d="M3 3.4q1.4 -2.4 3 -1.6q0.6 1 -1.4 1.4" fill="none" stroke="#333" stroke-width="0.9"/><circle cx="3.6" cy="9" r="2.2" fill="none" stroke="#b8b8c0" stroke-width="0.7" stroke-dasharray="0.8 0.9"/></svg>
<div class="tf" style="left:551.0px;top:521.5px;width:49.0px;"></div>
<div class="tf" style="left:607.0px;top:521.5px;width:70.0px;"></div>
<div class="tf" style="left:551.0px;top:532.5px;width:49.0px;"></div>
<div class="tf" style="left:607.0px;top:532.5px;width:63.0px;"></div>
<div class="tf" style="left:684.0px;top:532.5px;width:119.0px;"></div>
<div class="tf" style="left:817.0px;top:532.5px;width:133.0px;"></div>
<div class="tf" style="left:957.0px;top:532.5px;width:126.0px;"></div>
<div class="tf" style="left:1090.0px;top:532.5px;width:126.0px;"></div>
<div class="tf" style="left:1223.0px;top:532.5px;width:63.0px;"></div>
<div class="tf" style="left:1293.0px;top:532.5px;width:56.0px;"></div>
<div class="tf" style="left:1356.0px;top:532.5px;width:63.0px;"></div>
<div class="tf" style="left:1426.0px;top:532.5px;width:56.0px;"></div>
<div class="tf" style="left:1489.0px;top:532.5px;width:70.0px;"></div>
<span class="m" style="left:670.0px;top:527.90px;">@\                 @\                   +                  +                  q         W        q         W</span>
<div class="tf" style="left:551.0px;top:543.5px;width:49.0px;"></div>
<div class="tf" style="left:607.0px;top:543.5px;width:70.0px;"></div>
<div class="tf" style="left:551.0px;top:554.5px;width:119.0px;"></div>
<div class="tf" style="left:684.0px;top:554.5px;width:133.0px;"></div>
<div class="tf" style="left:824.0px;top:554.5px;width:126.0px;"></div>
<div class="tf" style="left:957.0px;top:554.5px;width:126.0px;"></div>
<div class="tf" style="left:1090.0px;top:554.5px;width:63.0px;"></div>
<div class="tf" style="left:1160.0px;top:554.5px;width:56.0px;"></div>
<div class="tf" style="left:1223.0px;top:554.5px;width:63.0px;"></div>
<div class="tf" style="left:1293.0px;top:554.5px;width:56.0px;"></div>
<div class="tf" style="left:1356.0px;top:554.5px;width:70.0px;"></div>
<span class="m" style="left:670.0px;top:549.90px;">@\                   +                  +                  q         W        q         W</span>
<div class="tf" style="left:551.0px;top:565.5px;width:49.0px;"></div>
<div class="tf" style="left:607.0px;top:565.5px;width:70.0px;"></div>
<div class="tf" style="left:551.0px;top:576.5px;width:119.0px;"></div>
<div class="tf" style="left:684.0px;top:576.5px;width:119.0px;"></div>
<div class="tf" style="left:817.0px;top:576.5px;width:133.0px;"></div>
<div class="tf" style="left:957.0px;top:576.5px;width:126.0px;"></div>
<div class="tf" style="left:1090.0px;top:576.5px;width:63.0px;"></div>
<div class="tf" style="left:1160.0px;top:576.5px;width:56.0px;"></div>
<div class="tf" style="left:1223.0px;top:576.5px;width:63.0px;"></div>
<div class="tf" style="left:1293.0px;top:576.5px;width:56.0px;"></div>
<div class="tf" style="left:1356.0px;top:576.5px;width:70.0px;"></div>
<span class="m" style="left:670.0px;top:571.90px;">@\                 @\                   +                  +         W        q         W        q</span>
<div class="tf" style="left:551.0px;top:587.5px;width:49.0px;"></div>
<div class="tf" style="left:607.0px;top:587.5px;width:70.0px;"></div>
<div class="tf" style="left:551.0px;top:601.5px;width:119.0px;"></div>
<div class="tf" style="left:684.0px;top:601.5px;width:119.0px;"></div>
<div class="tf" style="left:817.0px;top:601.5px;width:133.0px;"></div>
<div class="tf" style="left:957.0px;top:601.5px;width:49.0px;"></div>
<span class="m" style="left:670.0px;top:596.90px;">@\                 @\                   +       h$</span>
<div class="tf" style="left:1030.5px;top:601.5px;width:7.0px;"></div>
<div class="tf" style="left:1044.5px;top:601.5px;width:7.0px;"></div>
<div class="tf" style="left:1058.5px;top:601.5px;width:7.0px;"></div>
<div class="tf" style="left:1072.5px;top:601.5px;width:7.0px;"></div>
<div class="tf" style="left:1086.5px;top:601.5px;width:49.0px;"></div>
<div class="tf" style="left:1142.5px;top:601.5px;width:7.0px;"></div>
<div class="tf" style="left:1156.5px;top:601.5px;width:14.0px;"></div>
<span class="m" style="left:1037.5px;top:596.90px;">` ) |         ; /</span>
<svg style="left:1080px;top:600px" width="7" height="10"><circle cx="3.4" cy="5.6" r="2.2" fill="none" stroke="#b8b8c0" stroke-width="0.7" stroke-dasharray="0.8 0.9"/><rect x="3" y="1" width="1" height="1" fill="#999"/></svg>
<svg style="left:1170px;top:599px" width="10" height="12"><path d="M0.8 2.6h4.6q0 3 -4.6 4.4M0.4 8h6.6M3.4 8v2.6M8.2 0.6v10.6" fill="none" stroke="#000" stroke-width="1"/></svg>
<div class="tf" style="left:1187.0px;top:601.5px;width:7.0px;"></div>
<div class="tf" style="left:1201.0px;top:601.5px;width:21.0px;"></div>
<div class="tf" style="left:1229.0px;top:601.5px;width:7.0px;"></div>
<div class="tf" style="left:1250.0px;top:601.5px;width:14.0px;"></div>
<div class="tf" style="left:1271.0px;top:601.5px;width:49.0px;"></div>
<div class="tf" style="left:1327.0px;top:601.5px;width:21.0px;"></div>
<div class="tf" style="left:1355.0px;top:601.5px;width:7.0px;"></div>
<span class="m" style="left:1180.0px;top:596.90px;">h \   q A~  &lt;       }   +</span>
<div class="tf" style="left:551.0px;top:620.5px;width:14.0px;"></div>
<div class="tf" style="left:586.0px;top:620.5px;width:7.0px;"></div>
<div class="tf" style="left:600.0px;top:620.5px;width:42.0px;"></div>
<div class="tf" style="left:663.0px;top:620.5px;width:21.0px;"></div>
<div class="tf" style="left:691.0px;top:620.5px;width:14.0px;"></div>
<div class="tf" style="left:712.0px;top:620.5px;width:7.0px;"></div>
<div class="tf" style="left:726.0px;top:620.5px;width:70.0px;"></div>
<div class="tf" style="left:810.0px;top:620.5px;width:14.0px;"></div>
<div class="tf" style="left:831.0px;top:620.5px;width:21.0px;"></div>
<div class="tf" style="left:866.0px;top:620.5px;width:14.0px;"></div>
<div class="tf" style="left:894.0px;top:620.5px;width:14.0px;"></div>
<div class="tf" style="left:915.0px;top:620.5px;width:14.0px;"></div>
<div class="tf" style="left:950.0px;top:620.5px;width:7.0px;"></div>
<div class="tf" style="left:964.0px;top:620.5px;width:21.0px;"></div>
<div class="tf" style="left:999.0px;top:620.5px;width:14.0px;"></div>
<div class="tf" style="left:1020.0px;top:620.5px;width:7.0px;"></div>
<div class="tf" style="left:1034.0px;top:620.5px;width:7.0px;"></div>
<div class="tf" style="left:1048.0px;top:620.5px;width:28.0px;"></div>
<div class="tf" style="left:1083.0px;top:620.5px;width:14.0px;"></div>
<div class="tf" style="left:1111.0px;top:620.5px;width:21.0px;"></div>
<div class="tf" style="left:1139.0px;top:620.5px;width:7.0px;"></div>
<div class="tf" style="left:1153.0px;top:620.5px;width:7.0px;"></div>
<div class="tf" style="left:1167.0px;top:620.5px;width:14.0px;"></div>
<div class="tf" style="left:1202.0px;top:620.5px;width:28.0px;"></div>
<div class="tf" style="left:1237.0px;top:620.5px;width:14.0px;"></div>
<div class="tf" style="left:1265.0px;top:620.5px;width:7.0px;"></div>
<div class="tf" style="left:1279.0px;top:620.5px;width:63.0px;"></div>
<div class="tf" style="left:1356.0px;top:620.5px;width:14.0px;"></div>
<div class="tf" style="left:1377.0px;top:620.5px;width:7.0px;"></div>
<div class="tf" style="left:1391.0px;top:620.5px;width:7.0px;"></div>
<span class="m" style="left:565.0px;top:615.90px;">9u? q      3kv   Z  O &amp;          ;_  m   y~  2s  ?  O?s ǒ   Dq  e r ~    ~  ~f   | ^ &lt;  O&gt;u    .  H4           LZ  8 j</span>
<div style="left:1398px;top:620px;width:1px;height:8px;background:#222;"></div>
<div class="tf" style="left:1400.0px;top:620.5px;width:14.0px;"></div>
<div class="tf" style="left:1421.0px;top:620.5px;width:21.0px;"></div>
<div class="tf" style="left:1449.0px;top:620.5px;width:21.0px;"></div>
<div class="tf" style="left:1477.0px;top:620.5px;width:28.0px;"></div>
<div class="tf" style="left:1512.0px;top:620.5px;width:7.0px;"></div>
<div class="tf" style="left:1533.0px;top:620.5px;width:35.0px;"></div>
<div class="tf" style="left:1596.0px;top:620.5px;width:14.0px;"></div>
<div class="tf" style="left:1645.0px;top:620.5px;width:14.0px;"></div>
<div class="tf" style="left:1666.0px;top:620.5px;width:21.0px;"></div>
<div class="tf" style="left:1694.0px;top:620.5px;width:14.0px;"></div>
<div class="tf" style="left:1715.0px;top:620.5px;width:14.0px;"></div>
<div class="tf" style="left:1736.0px;top:620.5px;width:49.0px;"></div>
<div class="tf" style="left:1792.0px;top:620.5px;width:7.0px;"></div>
<div class="tf" style="left:1806.0px;top:620.5px;width:7.0px;"></div>
<div class="tf" style="left:1820.0px;top:620.5px;width:7.0px;"></div>
<div class="tf" style="left:1834.0px;top:620.5px;width:7.0px;"></div>
<div class="tf" style="left:1848.0px;top:620.5px;width:7.0px;"></div>
<div class="tf" style="left:1862.0px;top:620.5px;width:14.0px;"></div>
<div class="tf" style="left:1883.0px;top:620.5px;width:7.0px;"></div>
<span class="m" style="left:1414.0px;top:615.90px;">N   _   ;    k F?     K4-p  OYV?r  _      |  a       { z @ &lt; N D  ?</span>
<svg style="left:1687px;top:618px" width="8" height="11"><path d="M0.4 8.4h6.8" stroke="#000" stroke-width="1"/><path d="M3.6 2v2.6" stroke="#000" stroke-width="0.9"/></svg>
<div style="left:1891px;top:621px;width:2px;height:7px;background:#9a9aa2;"></div>
<div class="tf" style="left:558.0px;top:637.5px;width:21.0px;"></div>
<span class="m" style="left:551.0px;top:632.90px;">;</span>
<span class="m" style="left:579.5px;top:632.27px;font-size:14px;letter-spacing:0;transform:scaleX(1.25);transform-origin:0 0">Ӝ</span>
<div class="tf" style="left:618.0px;top:637.5px;width:28.0px;"></div>
<div class="tf" style="left:653.0px;top:637.5px;width:14.0px;"></div>
<div class="tf" style="left:681.0px;top:637.5px;width:7.0px;"></div>
<div class="tf" style="left:695.0px;top:637.5px;width:7.0px;"></div>
<div class="tf" style="left:709.0px;top:637.5px;width:7.0px;"></div>
<div class="tf" style="left:730.0px;top:637.5px;width:7.0px;"></div>
<div class="tf" style="left:744.0px;top:637.5px;width:7.0px;"></div>
<div class="tf" style="left:758.0px;top:637.5px;width:7.0px;"></div>
<div class="tf" style="left:786.0px;top:637.5px;width:7.0px;"></div>
<div class="tf" style="left:800.0px;top:637.5px;width:14.0px;"></div>
<div class="tf" style="left:835.0px;top:637.5px;width:21.0px;"></div>
<div class="tf" style="left:870.0px;top:637.5px;width:7.0px;"></div>
<div class="tf" style="left:884.0px;top:637.5px;width:42.0px;"></div>
<div class="tf" style="left:933.0px;top:637.5px;width:21.0px;"></div>
<div class="tf" style="left:961.0px;top:637.5px;width:7.0px;"></div>
<div class="tf" style="left:975.0px;top:637.5px;width:21.0px;"></div>
<div class="tf" style="left:1003.0px;top:637.5px;width:7.0px;"></div>
<div class="tf" style="left:1017.0px;top:637.5px;width:7.0px;"></div>
<div class="tf" style="left:1052.0px;top:637.5px;width:49.0px;"></div>
<div class="tf" style="left:1108.0px;top:637.5px;width:14.0px;"></div>
<div class="tf" style="left:1129.0px;top:637.5px;width:7.0px;"></div>
<span class="m" style="left:590.0px;top:632.90px;">Y~gX    j  bT ? 8 :( 8 g 3.N 2  C/v   =C #          h x   O S HbyF       [  p ě</span>
<div class="tf" style="left:558.0px;top:654.5px;width:35.0px;"></div>
<div class="tf" style="left:614.0px;top:654.5px;width:28.0px;"></div>
<div class="tf" style="left:663.0px;top:654.5px;width:35.0px;"></div>
<span class="m" style="left:607.0px;top:649.90px;">k    v&lt;t     E</span>
<svg style="left:592px;top:650px" width="10" height="13"><path d="M0.4 10.6h7" stroke="#000" stroke-width="1.1"/><path d="M5.4 2.4l2 1.8" stroke="#000" stroke-width="0.9"/></svg>
<svg style="left:699px;top:649px" width="11" height="14"><path d="M1.6 11.4h5.8q1.6 0 1.6 -1.6v-1" fill="none" stroke="#000" stroke-width="1.1"/><path d="M8.8 1.2q-2 0.6 -0.6 1.8q1.6 0.8 0 2q-1.2 0.4 -1.4 -0.6" fill="none" stroke="#000" stroke-width="0.8"/></svg>
<span class="m" style="left:707.5px;top:649.90px;">JD_q</span>
<svg style="left:735.5px;top:651px" width="10" height="13"><path d="M2.4 1.2L0.6 4.4M1 3.4h2.8M0.6 6h3.4M0.6 8.6h3.4M2.2 3.6v7.4M0.6 11.2l3.2 -1M5 2.8h4.4M5.6 4.8h3.4M5 7h4.8M5.6 9h3.4M7.2 1v11" fill="none" stroke="#000" stroke-width="0.8"/></svg>
<div class="tf" style="left:801.0px;top:654.5px;width:14.0px;"></div>
<div class="tf" style="left:829.0px;top:654.5px;width:14.0px;"></div>
<div class="tf" style="left:857.0px;top:654.5px;width:7.0px;"></div>
<div class="tf" style="left:871.0px;top:654.5px;width:7.0px;"></div>
<div class="tf" style="left:885.0px;top:654.5px;width:28.0px;"></div>
<div class="tf" style="left:927.0px;top:654.5px;width:21.0px;"></div>
<div class="tf" style="left:962.0px;top:654.5px;width:14.0px;"></div>
<div class="tf" style="left:983.0px;top:654.5px;width:7.0px;"></div>
<div class="tf" style="left:997.0px;top:654.5px;width:7.0px;"></div>
<div class="tf" style="left:1025.0px;top:654.5px;width:7.0px;"></div>
<span class="m" style="left:745.0px;top:649.90px;">W)kzN\6r  Gd  bN &lt; ˖    &lt;$   n2  H W *by</span>
<div style="left:553px;top:668px;width:2px;height:1px;background:#222;"></div>
<div style="left:702px;top:668px;width:2px;height:1px;background:#222;"></div>
<div style="left:551px;top:754px;width:252px;height:11px;background:#99c9ef;"></div>
<div style="left:551px;top:765px;width:161px;height:11px;background:#99c9ef;"></div>
<div style="left:551px;top:776px;width:133px;height:11px;background:#99c9ef;"></div>
<div style="left:551px;top:787px;width:7px;height:11px;background:#99c9ef;"></div>
<div style="left:551px;top:798px;width:84px;height:11px;background:#99c9ef;"></div>
<span class="m" style="left:551.0px;top:739.90px;">HTTP/1.1 200 OK</span>
<span class="m" style="left:551.0px;top:750.90px;">Date: Fri, 15 Nov 2019 13:33:47 GMT</span>
<span class="m" style="left:551.0px;top:761.90px;">Connection: keep-alive</span>
<span class="m" style="left:551.0px;top:772.90px;">Content-Length: 11</span>
<span class="m" style="left:551.0px;top:794.90px;">hello world</span>
</div>
</body></html>
